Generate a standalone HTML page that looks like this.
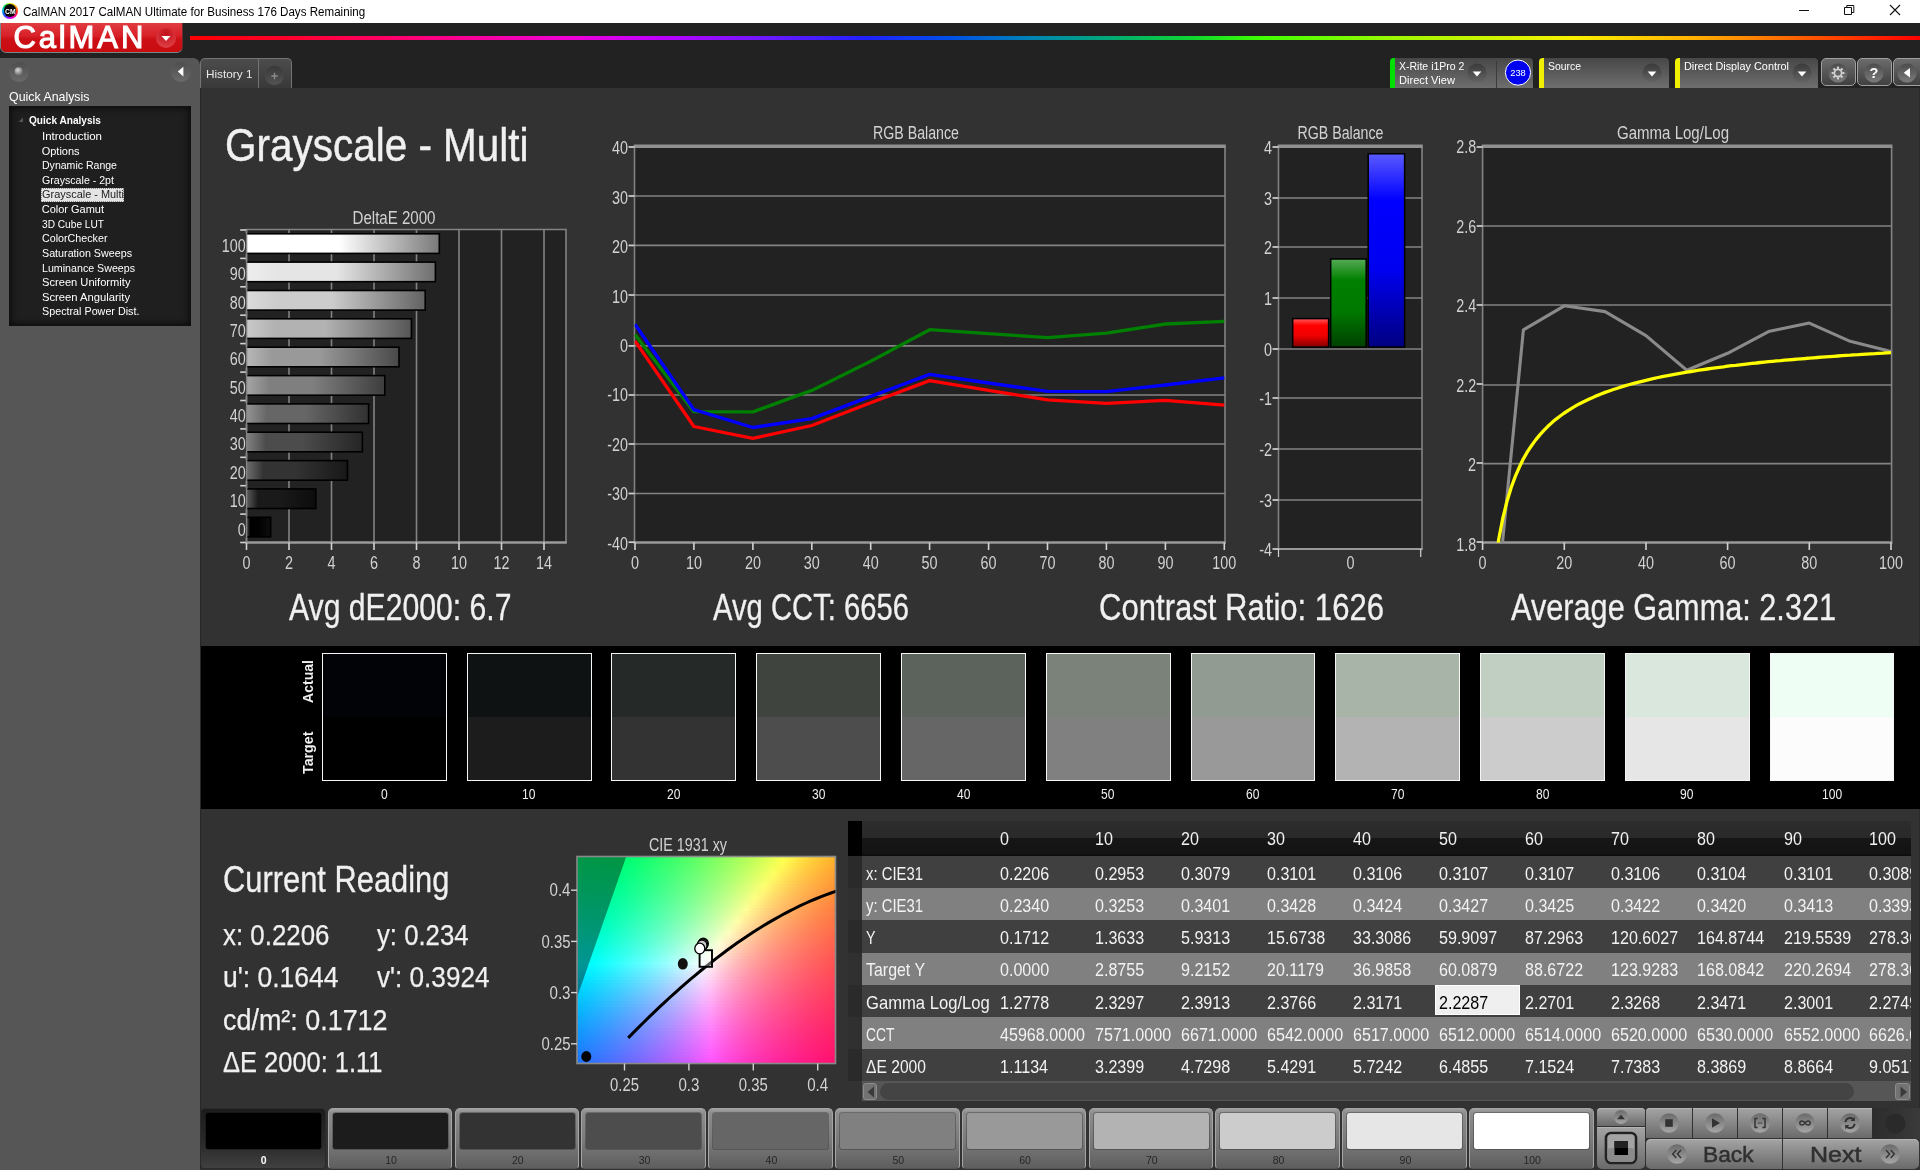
<!DOCTYPE html>
<html><head><meta charset="utf-8"><title>CalMAN</title><style>
html,body{margin:0;padding:0;background:#323232;}
#app{position:relative;width:1920px;height:1170px;overflow:hidden;font-family:"Liberation Sans",sans-serif;will-change:transform;}
.t{position:absolute;white-space:pre;line-height:1;transform-origin:0 0;}
svg{overflow:visible;}
svg text{font-family:"Liberation Sans",sans-serif;}
</style></head><body><div id="app">
<div class="titlebar" style="position:absolute;left:0px;top:0px;width:1920px;height:23px;background:#fff;"><div class="appicon" style="position:absolute;left:2px;top:2.9px;width:16px;height:16px;border-radius:50%;background:conic-gradient(from 0deg,#d8e800,#ffc000 40deg,#ff5000 80deg,#ff1030 110deg,#ff00a0 140deg,#c800ff 180deg,#5030ff 215deg,#0070ff 250deg,#00c8c0 285deg,#00d840 320deg,#80e800 345deg,#d8e800);"><div style="position:absolute;left:1.6px;top:1.6px;width:12.8px;height:12.8px;border-radius:50%;background:#050505;"></div><span class="t" style="left:2.7px;top:4.8px;font-size:7px;color:#fff;transform:scaleX(0.973);font-weight:bold;">CM</span></div><span class="t" style="left:23.2px;top:5.6px;font-size:12px;color:#000;transform:scaleX(0.966);">CalMAN 2017 CalMAN Ultimate for Business 176 Days Remaining</span><svg style="position:absolute;left:1780px;top:0" width="140" height="23" viewBox="1780 0 140 23"><path d="M1799 10.5h10" stroke="#111" stroke-width="1"/><path d="M1844.5 7.5h7v7h-7z M1846.8 7.5v-2h7v7h-2.3" stroke="#111" stroke-width="1" fill="none"/><path d="M1890 5l10 10M1900 5l-10 10" stroke="#111" stroke-width="1.1"/></svg></div>
<div class="header" style="position:absolute;left:0px;top:23px;width:1920px;height:65px;background:#222;"><div style="position:absolute;left:190px;top:12.6px;width:1730px;height:4.9px;background:linear-gradient(90deg,#ff0000 0%,#ff0030 6%,#ff0078 13%,#f000d8 22%,#c000ff 27%,#7018ff 33%,#2020ff 39%,#0050e8 44%,#0088b0 49%,#00a878 53%,#10d830 58%,#40ff00 62%,#a0f800 70%,#f8f000 80%,#ffb000 87%,#ff6000 93%,#ff0000 100%);"></div><div class="logo" style="position:absolute;left:1px;top:0px;width:180.8px;height:29.2px;background:linear-gradient(#e03c40 0%,#d82028 45%,#cc1016 55%,#c80c10 100%);border-radius:0 0 5px 5px;box-shadow:0 1px 0 #7a8686, -1px 0 0 #7a8686, 1px 0 0 #6a2a2e;"><span class="t" style="left:12.4px;top:-1.1px;font-size:31px;color:#fff;-webkit-text-stroke:1.1px #fff;letter-spacing:2.9px;">CalMAN</span><svg style="position:absolute;left:153.8px;top:4px" width="22" height="22" viewBox="0 0 22 22"><defs><radialGradient id="lg1" cx=".5" cy=".3" r=".7"><stop offset="0" stop-color="#c01018"/><stop offset="1" stop-color="#e04048"/></radialGradient></defs><circle cx="11" cy="11" r="10" fill="url(#lg1)"/><path d="M6.5 9h9l-4.5 5z" fill="#fff"/></svg></div></div>
<div class="sidebar" style="position:absolute;left:0px;top:58px;width:200px;height:1112px;background:#565656;border-radius:0 7px 0 0;"><svg style="position:absolute;left:8px;top:3px" width="22" height="22" viewBox="0 0 22 22"><defs><radialGradient id="kb" cx=".4" cy=".35" r=".6"><stop offset="0" stop-color="#d8d8d8"/><stop offset="1" stop-color="#777"/></radialGradient><linearGradient id="kr" x1="0" y1="0" x2="0" y2="1"><stop offset="0" stop-color="#4e4e4e"/><stop offset="1" stop-color="#6a6a6a"/></linearGradient></defs><circle cx="11" cy="11" r="10" fill="url(#kr)"/><circle cx="10.6" cy="10.3" r="4" fill="url(#kb)"/></svg><svg style="position:absolute;left:170px;top:3px" width="22" height="22" viewBox="0 0 22 22"><circle cx="11" cy="11" r="10" fill="url(#kr)"/><path d="M13.4 5.8v9.6l-5.6-4.800z" fill="#fff"/></svg><span class="t" style="left:9.3px;top:32.8px;font-size:12.6px;color:#fff;transform:scaleX(0.983);">Quick Analysis</span><div class="tree" style="position:absolute;left:9px;top:47.5px;width:181.5px;height:220px;background:#1f1f1f;box-shadow:inset 0 0 7px 2px #0c0c0c;"><svg style="position:absolute;left:9px;top:11px" width="6" height="6"><path d="M5 0.5v4.5h-4.5z" fill="#555"/></svg><span class="t" style="left:19.7px;top:9.1px;font-size:11.3px;color:#fff;transform:scaleX(0.893);font-weight:bold;">Quick Analysis</span><span class="t" style="left:32.7px;top:25.4px;font-size:11px;color:#fff;transform:scaleX(1.044);">Introduction</span><span class="t" style="left:32.7px;top:40.0px;font-size:11px;color:#fff;">Options</span><span class="t" style="left:32.7px;top:54.6px;font-size:11px;color:#fff;transform:scaleX(0.958);">Dynamic Range</span><span class="t" style="left:32.7px;top:69.2px;font-size:11px;color:#fff;transform:scaleX(0.965);">Grayscale - 2pt</span><div style="position:absolute;left:31.5px;top:82.38000000000001px;width:83px;height:14px;background:#e4e4e4;outline:1px dotted #888;outline-offset:-1px;"></div><span class="t" style="left:32.7px;top:83.9px;font-size:11px;color:#222;transform:scaleX(0.994);">Grayscale - Multi</span><span class="t" style="left:32.7px;top:98.5px;font-size:11px;color:#fff;">Color Gamut</span><span class="t" style="left:32.7px;top:113.1px;font-size:11px;color:#fff;transform:scaleX(0.922);">3D Cube LUT</span><span class="t" style="left:32.7px;top:127.7px;font-size:11px;color:#fff;transform:scaleX(0.974);">ColorChecker</span><span class="t" style="left:32.7px;top:142.3px;font-size:11px;color:#fff;transform:scaleX(0.975);">Saturation Sweeps</span><span class="t" style="left:32.7px;top:157.0px;font-size:11px;color:#fff;transform:scaleX(0.969);">Luminance Sweeps</span><span class="t" style="left:32.7px;top:171.6px;font-size:11px;color:#fff;transform:scaleX(1.012);">Screen Uniformity</span><span class="t" style="left:32.7px;top:186.2px;font-size:11px;color:#fff;transform:scaleX(1.021);">Screen Angularity</span><span class="t" style="left:32.7px;top:200.8px;font-size:11px;color:#fff;transform:scaleX(0.978);">Spectral Power Dist.</span></div></div>
<div style="position:absolute;left:200px;top:88px;width:1px;height:1082px;background:#272727;"></div>
<div style="position:absolute;left:1919px;top:88px;width:1px;height:1020px;background:#2a2a2a;"></div>
<div class="tab" style="position:absolute;left:200px;top:58px;width:91.5px;height:30px;background:linear-gradient(#4c4c4c,#393939);border:1px solid #747474;border-bottom:none;border-radius:5px 5px 0 0;box-sizing:border-box;"><span class="t" style="left:5.4px;top:10.3px;font-size:11.4px;color:#e8e8e8;transform:scaleX(1.034);">History 1</span><div style="position:absolute;left:56.6px;top:0px;width:1px;height:29px;background:#747474;"></div><svg style="position:absolute;left:62.6px;top:5.6px" width="21" height="21" viewBox="0 0 21 21"><defs><linearGradient id="pl" x1="0" y1="0" x2="0" y2="1"><stop offset="0" stop-color="#383838"/><stop offset="1" stop-color="#545454"/></linearGradient></defs><circle cx="10.5" cy="10.5" r="9.7" fill="url(#pl)"/><path d="M7.300 11h6.400M10.500 7.800v6.400" stroke="#8c8c8c" stroke-width="1.3"/></svg></div>
<div class="panel" style="position:absolute;left:1390px;top:58px;width:142.5px;height:30px;background:linear-gradient(#474747,#6e6e6e);border-radius:4px 4px 0 0;"><div style="position:absolute;left:0px;top:0px;width:5px;height:30px;background:#00e000;border-radius:4px 0 0 0;"></div><span class="t" style="left:8.5px;top:2.5px;font-size:10.8px;color:#fff;transform:scaleX(0.974);">X-Rite i1Pro 2</span><span class="t" style="left:8.5px;top:16.6px;font-size:10.8px;color:#fff;transform:scaleX(1.029);">Direct View</span><svg style="position:absolute;left:77px;top:5px" width="20" height="20" viewBox="0 0 20 20"><defs><linearGradient id="dd1390" x1="0" y1="0" x2="0" y2="1"><stop offset="0" stop-color="#3a3a3a"/><stop offset="1" stop-color="#636363"/></linearGradient></defs><circle cx="10" cy="10" r="9.5" fill="url(#dd1390)"/><path d="M5.7 8.6h8.6l-4.3 4.8z" fill="#fff"/></svg><div style="position:absolute;left:106px;top:3px;width:1px;height:27px;background:#3c3c3c;"></div><svg style="position:absolute;left:113.6px;top:0.7px" width="28" height="28" viewBox="0 0 28 28"><circle cx="14" cy="13.6" r="12.6" fill="#0000f0" stroke="#fff" stroke-width="1"/><text x="14" y="17" font-family="Liberation Sans,sans-serif" font-size="9.5" fill="#fff" text-anchor="middle" textLength="15.5" lengthAdjust="spacingAndGlyphs">238</text></svg></div>
<div class="panel" style="position:absolute;left:1539px;top:58px;width:129.5px;height:30px;background:linear-gradient(#474747,#6e6e6e);border-radius:4px 4px 0 0;"><div style="position:absolute;left:0px;top:0px;width:5px;height:30px;background:#f0f000;border-radius:4px 0 0 0;"></div><span class="t" style="left:8.5px;top:2.5px;font-size:10.8px;color:#fff;transform:scaleX(0.964);">Source</span><svg style="position:absolute;left:103px;top:5px" width="20" height="20" viewBox="0 0 20 20"><defs><linearGradient id="dd1539" x1="0" y1="0" x2="0" y2="1"><stop offset="0" stop-color="#3a3a3a"/><stop offset="1" stop-color="#636363"/></linearGradient></defs><circle cx="10" cy="10" r="9.5" fill="url(#dd1539)"/><path d="M5.7 8.6h8.6l-4.3 4.8z" fill="#fff"/></svg></div>
<div class="panel" style="position:absolute;left:1675px;top:58px;width:143px;height:30px;background:linear-gradient(#474747,#6e6e6e);border-radius:4px 4px 0 0;"><div style="position:absolute;left:0px;top:0px;width:5px;height:30px;background:#f0f000;border-radius:4px 0 0 0;"></div><span class="t" style="left:8.5px;top:2.5px;font-size:10.8px;color:#fff;transform:scaleX(1.006);">Direct Display Control</span><svg style="position:absolute;left:117px;top:5px" width="20" height="20" viewBox="0 0 20 20"><defs><linearGradient id="dd1675" x1="0" y1="0" x2="0" y2="1"><stop offset="0" stop-color="#3a3a3a"/><stop offset="1" stop-color="#636363"/></linearGradient></defs><circle cx="10" cy="10" r="9.5" fill="url(#dd1675)"/><path d="M5.7 8.6h8.6l-4.3 4.8z" fill="#fff"/></svg></div>
<div class="tbtn" style="position:absolute;left:1821px;top:58px;width:34.5px;height:28px;background:linear-gradient(#6c6c6c,#404040);border:1px solid #a0a0a0;border-radius:5px;box-sizing:border-box;"><svg style="position:absolute;left:5px;top:2.5px" width="22" height="22" viewBox="0 0 22 22"><defs><linearGradient id="bc" x1="0" y1="0" x2="0" y2="1"><stop offset="0" stop-color="#4c4c4c"/><stop offset="1" stop-color="#7c7c7c"/></linearGradient></defs><circle cx="11" cy="11" r="9.6" fill="url(#bc)"/><g transform="translate(11 11)" fill="none" stroke="#d4d4d4"><circle r="3.6" stroke-width="1.7"/><g stroke-width="2.1"><path d="M0 -4.3V-6.4" transform="rotate(0)"/><path d="M0 -4.3V-6.4" transform="rotate(45)"/><path d="M0 -4.3V-6.4" transform="rotate(90)"/><path d="M0 -4.3V-6.4" transform="rotate(135)"/><path d="M0 -4.3V-6.4" transform="rotate(180)"/><path d="M0 -4.3V-6.4" transform="rotate(225)"/><path d="M0 -4.3V-6.4" transform="rotate(270)"/><path d="M0 -4.3V-6.4" transform="rotate(315)"/></g></g></svg></div>
<div class="tbtn" style="position:absolute;left:1857px;top:58px;width:34.5px;height:28px;background:linear-gradient(#6c6c6c,#404040);border:1px solid #a0a0a0;border-radius:5px;box-sizing:border-box;"><svg style="position:absolute;left:5px;top:2.5px" width="22" height="22" viewBox="0 0 22 22"><circle cx="11" cy="11" r="9.6" fill="url(#bc)"/><text x="11" y="16.3" font-family="Liberation Sans,sans-serif" font-weight="bold" font-size="14.5" fill="#fff" text-anchor="middle">?</text></svg></div>
<div class="tbtn" style="position:absolute;left:1893px;top:58px;width:32px;height:28px;background:linear-gradient(#6c6c6c,#404040);border:1px solid #a0a0a0;border-radius:5px 0 0 5px;box-sizing:border-box;"><svg style="position:absolute;left:1.5px;top:2.5px" width="22" height="22" viewBox="0 0 22 22"><circle cx="11" cy="11" r="9.6" fill="url(#bc)"/><path d="M14 6v9.6l-6.3-4.8z" fill="#fff"/></svg></div>
<span class="t" style="left:224.8px;top:121.6px;font-size:46.3px;color:#f0f0f0;transform:scaleX(0.874);-webkit-text-stroke:0.45px #f0f0f0;">Grayscale - Multi</span>
<svg style="position:absolute;left:0;top:0" width="1920" height="640" viewBox="0 0 1920 640"><defs><linearGradient id="b100" x1="0" y1="0" x2="1" y2="0"><stop offset="0" stop-color="#ffffff"/><stop offset=".17" stop-color="#ffffff"/><stop offset=".48" stop-color="#ffffff"/><stop offset="1" stop-color="#7a7a7a"/></linearGradient><linearGradient id="b90" x1="0" y1="0" x2="1" y2="0"><stop offset="0" stop-color="#ededed"/><stop offset=".17" stop-color="#e5e5e5"/><stop offset=".48" stop-color="#e5e5e5"/><stop offset="1" stop-color="#6e6e6e"/></linearGradient><linearGradient id="b80" x1="0" y1="0" x2="1" y2="0"><stop offset="0" stop-color="#dbdbdb"/><stop offset=".17" stop-color="#cccccc"/><stop offset=".48" stop-color="#cccccc"/><stop offset="1" stop-color="#626262"/></linearGradient><linearGradient id="b70" x1="0" y1="0" x2="1" y2="0"><stop offset="0" stop-color="#c9c9c9"/><stop offset=".17" stop-color="#b2b2b2"/><stop offset=".48" stop-color="#b2b2b2"/><stop offset="1" stop-color="#565656"/></linearGradient><linearGradient id="b60" x1="0" y1="0" x2="1" y2="0"><stop offset="0" stop-color="#b8b8b8"/><stop offset=".17" stop-color="#999999"/><stop offset=".48" stop-color="#999999"/><stop offset="1" stop-color="#494949"/></linearGradient><linearGradient id="b50" x1="0" y1="0" x2="1" y2="0"><stop offset="0" stop-color="#a6a6a6"/><stop offset=".17" stop-color="#7f7f7f"/><stop offset=".48" stop-color="#7f7f7f"/><stop offset="1" stop-color="#3d3d3d"/></linearGradient><linearGradient id="b40" x1="0" y1="0" x2="1" y2="0"><stop offset="0" stop-color="#949494"/><stop offset=".17" stop-color="#666666"/><stop offset=".48" stop-color="#666666"/><stop offset="1" stop-color="#313131"/></linearGradient><linearGradient id="b30" x1="0" y1="0" x2="1" y2="0"><stop offset="0" stop-color="#828282"/><stop offset=".17" stop-color="#4c4c4c"/><stop offset=".48" stop-color="#4c4c4c"/><stop offset="1" stop-color="#252525"/></linearGradient><linearGradient id="b20" x1="0" y1="0" x2="1" y2="0"><stop offset="0" stop-color="#707070"/><stop offset=".17" stop-color="#333333"/><stop offset=".48" stop-color="#333333"/><stop offset="1" stop-color="#181818"/></linearGradient><linearGradient id="b10" x1="0" y1="0" x2="1" y2="0"><stop offset="0" stop-color="#5e5e5e"/><stop offset=".17" stop-color="#1a1a1a"/><stop offset=".48" stop-color="#1a1a1a"/><stop offset="1" stop-color="#0c0c0c"/></linearGradient><linearGradient id="b0" x1="0" y1="0" x2="1" y2="0"><stop offset="0" stop-color="#4c4c4c"/><stop offset=".17" stop-color="#000000"/><stop offset=".48" stop-color="#000000"/><stop offset="1" stop-color="#0e0e0e"/></linearGradient><linearGradient id="gR" x1="0" y1="0" x2="0" y2="1"><stop offset="0" stop-color="#ff5a5a"/><stop offset=".24" stop-color="#ff0000"/><stop offset=".6" stop-color="#f00000"/><stop offset="1" stop-color="#800000"/></linearGradient><linearGradient id="gG" x1="0" y1="0" x2="0" y2="1"><stop offset="0" stop-color="#55aa55"/><stop offset=".24" stop-color="#008000"/><stop offset=".6" stop-color="#007800"/><stop offset="1" stop-color="#004000"/></linearGradient><linearGradient id="gB" x1="0" y1="0" x2="0" y2="1"><stop offset="0" stop-color="#5a5aff"/><stop offset=".24" stop-color="#0000ff"/><stop offset=".6" stop-color="#0000f0"/><stop offset="1" stop-color="#000080"/></linearGradient></defs><g id="deltaE"><rect x="246.5" y="230" width="319.5" height="312.5" fill="#222"/><path d="M289.0 230V542.5" stroke="#838383" stroke-width="1.6"/><path d="M331.5 230V542.5" stroke="#838383" stroke-width="1.6"/><path d="M374.0 230V542.5" stroke="#838383" stroke-width="1.6"/><path d="M416.5 230V542.5" stroke="#838383" stroke-width="1.6"/><path d="M459.0 230V542.5" stroke="#838383" stroke-width="1.6"/><path d="M501.5 230V542.5" stroke="#838383" stroke-width="1.6"/><path d="M544.0 230V542.5" stroke="#838383" stroke-width="1.6"/><path d="M246.5 542.5V229.5H566V542.5" stroke="#838383" stroke-width="1.6" fill="none"/><path d="M245.7 542.5H566.8" stroke="#9a9a9a" stroke-width="2.4"/><path d="M240.2 230.0H246.5" stroke="#d2d2d2" stroke-width="1.6"/><path d="M240.2 258.4H246.5" stroke="#d2d2d2" stroke-width="1.6"/><path d="M240.2 286.8H246.5" stroke="#d2d2d2" stroke-width="1.6"/><path d="M240.2 315.2H246.5" stroke="#d2d2d2" stroke-width="1.6"/><path d="M240.2 343.6H246.5" stroke="#d2d2d2" stroke-width="1.6"/><path d="M240.2 372.1H246.5" stroke="#d2d2d2" stroke-width="1.6"/><path d="M240.2 400.5H246.5" stroke="#d2d2d2" stroke-width="1.6"/><path d="M240.2 428.9H246.5" stroke="#d2d2d2" stroke-width="1.6"/><path d="M240.2 457.3H246.5" stroke="#d2d2d2" stroke-width="1.6"/><path d="M240.2 485.7H246.5" stroke="#d2d2d2" stroke-width="1.6"/><path d="M240.2 514.1H246.5" stroke="#d2d2d2" stroke-width="1.6"/><path d="M240.2 542.5H246.5" stroke="#d2d2d2" stroke-width="1.6"/><path d="M246.5 542.5V550.0" stroke="#d2d2d2" stroke-width="1.6"/><text x="246.5" y="569.0" font-size="17.5" fill="#d2d2d2" text-anchor="middle" textLength="8.0" lengthAdjust="spacingAndGlyphs">0</text><path d="M289.0 542.5V550.0" stroke="#d2d2d2" stroke-width="1.6"/><text x="289.0" y="569.0" font-size="17.5" fill="#d2d2d2" text-anchor="middle" textLength="8.0" lengthAdjust="spacingAndGlyphs">2</text><path d="M331.5 542.5V550.0" stroke="#d2d2d2" stroke-width="1.6"/><text x="331.5" y="569.0" font-size="17.5" fill="#d2d2d2" text-anchor="middle" textLength="8.0" lengthAdjust="spacingAndGlyphs">4</text><path d="M374.0 542.5V550.0" stroke="#d2d2d2" stroke-width="1.6"/><text x="374.0" y="569.0" font-size="17.5" fill="#d2d2d2" text-anchor="middle" textLength="8.0" lengthAdjust="spacingAndGlyphs">6</text><path d="M416.5 542.5V550.0" stroke="#d2d2d2" stroke-width="1.6"/><text x="416.5" y="569.0" font-size="17.5" fill="#d2d2d2" text-anchor="middle" textLength="8.0" lengthAdjust="spacingAndGlyphs">8</text><path d="M459.0 542.5V550.0" stroke="#d2d2d2" stroke-width="1.6"/><text x="459.0" y="569.0" font-size="17.5" fill="#d2d2d2" text-anchor="middle" textLength="16.0" lengthAdjust="spacingAndGlyphs">10</text><path d="M501.5 542.5V550.0" stroke="#d2d2d2" stroke-width="1.6"/><text x="501.5" y="569.0" font-size="17.5" fill="#d2d2d2" text-anchor="middle" textLength="16.0" lengthAdjust="spacingAndGlyphs">12</text><path d="M544.0 542.5V550.0" stroke="#d2d2d2" stroke-width="1.6"/><text x="544.0" y="569.0" font-size="17.5" fill="#d2d2d2" text-anchor="middle" textLength="16.0" lengthAdjust="spacingAndGlyphs">14</text><rect x="246.2" y="233.8" width="193.1" height="19.6" fill="url(#b100)" stroke="#000" stroke-width="1.6"/><text x="245.7" y="252.0" font-size="17.5" fill="#d2d2d2" text-anchor="end" textLength="23.9" lengthAdjust="spacingAndGlyphs">100</text><rect x="246.2" y="262.1" width="189.2" height="19.6" fill="url(#b90)" stroke="#000" stroke-width="1.6"/><text x="245.7" y="280.3" font-size="17.5" fill="#d2d2d2" text-anchor="end" textLength="16.0" lengthAdjust="spacingAndGlyphs">90</text><rect x="246.2" y="290.5" width="179.0" height="19.6" fill="url(#b80)" stroke="#000" stroke-width="1.6"/><text x="245.7" y="308.7" font-size="17.5" fill="#d2d2d2" text-anchor="end" textLength="16.0" lengthAdjust="spacingAndGlyphs">80</text><rect x="246.2" y="318.8" width="165.2" height="19.6" fill="url(#b70)" stroke="#000" stroke-width="1.6"/><text x="245.7" y="337.0" font-size="17.5" fill="#d2d2d2" text-anchor="end" textLength="16.0" lengthAdjust="spacingAndGlyphs">70</text><rect x="246.2" y="347.2" width="152.8" height="19.6" fill="url(#b60)" stroke="#000" stroke-width="1.6"/><text x="245.7" y="365.4" font-size="17.5" fill="#d2d2d2" text-anchor="end" textLength="16.0" lengthAdjust="spacingAndGlyphs">60</text><rect x="246.2" y="375.6" width="138.6" height="19.6" fill="url(#b50)" stroke="#000" stroke-width="1.6"/><text x="245.7" y="393.8" font-size="17.5" fill="#d2d2d2" text-anchor="end" textLength="16.0" lengthAdjust="spacingAndGlyphs">50</text><rect x="246.2" y="403.9" width="122.4" height="19.6" fill="url(#b40)" stroke="#000" stroke-width="1.6"/><text x="245.7" y="422.1" font-size="17.5" fill="#d2d2d2" text-anchor="end" textLength="16.0" lengthAdjust="spacingAndGlyphs">40</text><rect x="246.2" y="432.2" width="116.2" height="19.6" fill="url(#b30)" stroke="#000" stroke-width="1.6"/><text x="245.7" y="450.4" font-size="17.5" fill="#d2d2d2" text-anchor="end" textLength="16.0" lengthAdjust="spacingAndGlyphs">30</text><rect x="246.2" y="460.6" width="101.3" height="19.6" fill="url(#b20)" stroke="#000" stroke-width="1.6"/><text x="245.7" y="478.8" font-size="17.5" fill="#d2d2d2" text-anchor="end" textLength="16.0" lengthAdjust="spacingAndGlyphs">20</text><rect x="246.2" y="488.9" width="69.6" height="19.6" fill="url(#b10)" stroke="#000" stroke-width="1.6"/><text x="245.7" y="507.1" font-size="17.5" fill="#d2d2d2" text-anchor="end" textLength="16.0" lengthAdjust="spacingAndGlyphs">10</text><rect x="246.2" y="517.3" width="24.5" height="19.6" fill="url(#b0)" stroke="#000" stroke-width="1.6"/><text x="245.7" y="535.5" font-size="17.5" fill="#d2d2d2" text-anchor="end" textLength="8.0" lengthAdjust="spacingAndGlyphs">0</text><path d="M246.5 542.5V230" stroke="#838383" stroke-width="1.6"/><text x="394.0" y="224.0" font-size="17.5" fill="#d2d2d2" text-anchor="middle" textLength="83.0" lengthAdjust="spacingAndGlyphs">DeltaE 2000</text></g><g id="rgbline"><rect x="634.5" y="146.5" width="590.5" height="396.0" fill="#222"/><path d="M634.5 493.5H1225" stroke="#838383" stroke-width="1.7"/><path d="M634.5 444.0H1225" stroke="#838383" stroke-width="1.7"/><path d="M634.5 395.0H1225" stroke="#838383" stroke-width="1.7"/><path d="M634.5 345.9H1225" stroke="#838383" stroke-width="1.7"/><path d="M634.5 295.0H1225" stroke="#838383" stroke-width="1.7"/><path d="M634.5 245.4H1225" stroke="#838383" stroke-width="1.7"/><path d="M634.5 196.0H1225" stroke="#838383" stroke-width="1.7"/><path d="M634.5 542.5V146.5M1225 146.5V542.5" stroke="#838383" stroke-width="1.6" fill="none"/><path d="M633.7 146.2H1225.8" stroke="#909090" stroke-width="3.6"/><path d="M633.7 542.5H1225.8" stroke="#9a9a9a" stroke-width="2.6"/><path d="M628.5 542.2H634.5" stroke="#d2d2d2" stroke-width="1.7"/><text x="628.0" y="549.5" font-size="17.5" fill="#d2d2d2" text-anchor="end" textLength="20.7" lengthAdjust="spacingAndGlyphs">-40</text><path d="M628.5 493.5H634.5" stroke="#d2d2d2" stroke-width="1.7"/><text x="628.0" y="500.1" font-size="17.5" fill="#d2d2d2" text-anchor="end" textLength="20.7" lengthAdjust="spacingAndGlyphs">-30</text><path d="M628.5 444.0H634.5" stroke="#d2d2d2" stroke-width="1.7"/><text x="628.0" y="450.7" font-size="17.5" fill="#d2d2d2" text-anchor="end" textLength="20.7" lengthAdjust="spacingAndGlyphs">-20</text><path d="M628.5 395.0H634.5" stroke="#d2d2d2" stroke-width="1.7"/><text x="628.0" y="401.3" font-size="17.5" fill="#d2d2d2" text-anchor="end" textLength="20.7" lengthAdjust="spacingAndGlyphs">-10</text><path d="M628.5 345.9H634.5" stroke="#d2d2d2" stroke-width="1.7"/><text x="628.0" y="351.9" font-size="17.5" fill="#d2d2d2" text-anchor="end" textLength="8.0" lengthAdjust="spacingAndGlyphs">0</text><path d="M628.5 295.0H634.5" stroke="#d2d2d2" stroke-width="1.7"/><text x="628.0" y="302.5" font-size="17.5" fill="#d2d2d2" text-anchor="end" textLength="16.0" lengthAdjust="spacingAndGlyphs">10</text><path d="M628.5 245.4H634.5" stroke="#d2d2d2" stroke-width="1.7"/><text x="628.0" y="253.1" font-size="17.5" fill="#d2d2d2" text-anchor="end" textLength="16.0" lengthAdjust="spacingAndGlyphs">20</text><path d="M628.5 196.0H634.5" stroke="#d2d2d2" stroke-width="1.7"/><text x="628.0" y="203.7" font-size="17.5" fill="#d2d2d2" text-anchor="end" textLength="16.0" lengthAdjust="spacingAndGlyphs">30</text><path d="M628.5 147.0H634.5" stroke="#d2d2d2" stroke-width="1.7"/><text x="628.0" y="154.3" font-size="17.5" fill="#d2d2d2" text-anchor="end" textLength="16.0" lengthAdjust="spacingAndGlyphs">40</text><path d="M635.0 542.5V550.0" stroke="#d2d2d2" stroke-width="1.6"/><text x="635.0" y="569.0" font-size="17.5" fill="#d2d2d2" text-anchor="middle" textLength="8.0" lengthAdjust="spacingAndGlyphs">0</text><path d="M693.9 542.5V550.0" stroke="#d2d2d2" stroke-width="1.6"/><text x="693.9" y="569.0" font-size="17.5" fill="#d2d2d2" text-anchor="middle" textLength="16.0" lengthAdjust="spacingAndGlyphs">10</text><path d="M752.9 542.5V550.0" stroke="#d2d2d2" stroke-width="1.6"/><text x="752.9" y="569.0" font-size="17.5" fill="#d2d2d2" text-anchor="middle" textLength="16.0" lengthAdjust="spacingAndGlyphs">20</text><path d="M811.8 542.5V550.0" stroke="#d2d2d2" stroke-width="1.6"/><text x="811.8" y="569.0" font-size="17.5" fill="#d2d2d2" text-anchor="middle" textLength="16.0" lengthAdjust="spacingAndGlyphs">30</text><path d="M870.7 542.5V550.0" stroke="#d2d2d2" stroke-width="1.6"/><text x="870.7" y="569.0" font-size="17.5" fill="#d2d2d2" text-anchor="middle" textLength="16.0" lengthAdjust="spacingAndGlyphs">40</text><path d="M929.6 542.5V550.0" stroke="#d2d2d2" stroke-width="1.6"/><text x="929.6" y="569.0" font-size="17.5" fill="#d2d2d2" text-anchor="middle" textLength="16.0" lengthAdjust="spacingAndGlyphs">50</text><path d="M988.6 542.5V550.0" stroke="#d2d2d2" stroke-width="1.6"/><text x="988.6" y="569.0" font-size="17.5" fill="#d2d2d2" text-anchor="middle" textLength="16.0" lengthAdjust="spacingAndGlyphs">60</text><path d="M1047.5 542.5V550.0" stroke="#d2d2d2" stroke-width="1.6"/><text x="1047.5" y="569.0" font-size="17.5" fill="#d2d2d2" text-anchor="middle" textLength="16.0" lengthAdjust="spacingAndGlyphs">70</text><path d="M1106.4 542.5V550.0" stroke="#d2d2d2" stroke-width="1.6"/><text x="1106.4" y="569.0" font-size="17.5" fill="#d2d2d2" text-anchor="middle" textLength="16.0" lengthAdjust="spacingAndGlyphs">80</text><path d="M1165.4 542.5V550.0" stroke="#d2d2d2" stroke-width="1.6"/><text x="1165.4" y="569.0" font-size="17.5" fill="#d2d2d2" text-anchor="middle" textLength="16.0" lengthAdjust="spacingAndGlyphs">90</text><path d="M1224.3 542.5V550.0" stroke="#d2d2d2" stroke-width="1.6"/><text x="1224.3" y="569.0" font-size="17.5" fill="#d2d2d2" text-anchor="middle" textLength="23.9" lengthAdjust="spacingAndGlyphs">100</text><clipPath id="cl1"><rect x="634.5" y="146.5" width="590.5" height="396.0"/></clipPath><g clip-path="url(#cl1)" fill="none" stroke-width="3.3" stroke-linejoin="round"><polyline points="635.0,341.0 693.9,426.5 752.9,438.3 811.8,425.5 870.7,402.8 929.6,380.6 988.6,390.4 1047.5,399.8 1106.4,403.3 1165.4,400.3 1224.3,405.2" stroke="#ff0000"/><polyline points="635.0,334.6 693.9,411.7 752.9,411.9 811.8,390.4 870.7,361.3 929.6,329.7 988.6,333.6 1047.5,337.6 1106.4,333.1 1165.4,324.0 1224.3,321.3" stroke="#008000"/><polyline points="635.0,324.3 693.9,409.7 752.9,427.5 811.8,418.6 870.7,396.4 929.6,374.4 988.6,383.0 1047.5,391.4 1106.4,391.7 1165.4,385.0 1224.3,377.8" stroke="#0000ff"/></g><text x="916.0" y="138.5" font-size="17.5" fill="#d2d2d2" text-anchor="middle" textLength="86.0" lengthAdjust="spacingAndGlyphs">RGB Balance</text></g><g id="rgbbar"><rect x="1278.5" y="146.5" width="143.5" height="402.5" fill="#222"/><path d="M1278.5 500.0H1422" stroke="#838383" stroke-width="1.7"/><path d="M1278.5 449.0H1422" stroke="#838383" stroke-width="1.7"/><path d="M1278.5 398.0H1422" stroke="#838383" stroke-width="1.7"/><path d="M1278.5 349.0H1422" stroke="#838383" stroke-width="1.7"/><path d="M1278.5 298.0H1422" stroke="#838383" stroke-width="1.7"/><path d="M1278.5 247.0H1422" stroke="#838383" stroke-width="1.7"/><path d="M1278.5 198.0H1422" stroke="#838383" stroke-width="1.7"/><path d="M1278.5 549V146.5M1422 146.5V549" stroke="#838383" stroke-width="1.6" fill="none"/><path d="M1277.7 146.2H1422.8" stroke="#909090" stroke-width="3.6"/><path d="M1277.7 549H1422.8" stroke="#9a9a9a" stroke-width="2"/><path d="M1272.5 549.0H1278.5" stroke="#d2d2d2" stroke-width="1.7"/><text x="1272.0" y="555.9" font-size="17.5" fill="#d2d2d2" text-anchor="end" textLength="12.8" lengthAdjust="spacingAndGlyphs">-4</text><path d="M1272.5 500.0H1278.5" stroke="#d2d2d2" stroke-width="1.7"/><text x="1272.0" y="506.9" font-size="17.5" fill="#d2d2d2" text-anchor="end" textLength="12.8" lengthAdjust="spacingAndGlyphs">-3</text><path d="M1272.5 449.0H1278.5" stroke="#d2d2d2" stroke-width="1.7"/><text x="1272.0" y="455.9" font-size="17.5" fill="#d2d2d2" text-anchor="end" textLength="12.8" lengthAdjust="spacingAndGlyphs">-2</text><path d="M1272.5 398.0H1278.5" stroke="#d2d2d2" stroke-width="1.7"/><text x="1272.0" y="404.9" font-size="17.5" fill="#d2d2d2" text-anchor="end" textLength="12.8" lengthAdjust="spacingAndGlyphs">-1</text><path d="M1272.5 349.0H1278.5" stroke="#d2d2d2" stroke-width="1.7"/><text x="1272.0" y="355.9" font-size="17.5" fill="#d2d2d2" text-anchor="end" textLength="8.0" lengthAdjust="spacingAndGlyphs">0</text><path d="M1272.5 298.0H1278.5" stroke="#d2d2d2" stroke-width="1.7"/><text x="1272.0" y="304.9" font-size="17.5" fill="#d2d2d2" text-anchor="end" textLength="8.0" lengthAdjust="spacingAndGlyphs">1</text><path d="M1272.5 247.0H1278.5" stroke="#d2d2d2" stroke-width="1.7"/><text x="1272.0" y="253.9" font-size="17.5" fill="#d2d2d2" text-anchor="end" textLength="8.0" lengthAdjust="spacingAndGlyphs">2</text><path d="M1272.5 198.0H1278.5" stroke="#d2d2d2" stroke-width="1.7"/><text x="1272.0" y="204.9" font-size="17.5" fill="#d2d2d2" text-anchor="end" textLength="8.0" lengthAdjust="spacingAndGlyphs">3</text><path d="M1272.5 147.0H1278.5" stroke="#d2d2d2" stroke-width="1.7"/><text x="1272.0" y="153.9" font-size="17.5" fill="#d2d2d2" text-anchor="end" textLength="8.0" lengthAdjust="spacingAndGlyphs">4</text><path d="M1278.5 549V557M1420.7 549V557" stroke="#d2d2d2" stroke-width="1.2"/><text x="1350.5" y="569.0" font-size="17.5" fill="#d2d2d2" text-anchor="middle" textLength="8.0" lengthAdjust="spacingAndGlyphs">0</text><rect x="1292.7" y="318.6" width="35.9" height="28.5" fill="url(#gR)" stroke="#000" stroke-width="1.5"/><rect x="1330.7" y="259" width="35.5" height="88.1" fill="url(#gG)" stroke="#000" stroke-width="1.5"/><rect x="1368.2" y="153.8" width="36.4" height="193.3" fill="url(#gB)" stroke="#000" stroke-width="1.5"/><text x="1340.5" y="138.5" font-size="17.5" fill="#d2d2d2" text-anchor="middle" textLength="86.0" lengthAdjust="spacingAndGlyphs">RGB Balance</text></g><g id="gamma"><rect x="1482.6" y="146.5" width="409.0" height="396.0" fill="#222"/><path d="M1482.6 463.6H1891.6" stroke="#838383" stroke-width="1.7"/><path d="M1482.6 385.0H1891.6" stroke="#838383" stroke-width="1.7"/><path d="M1482.6 305.0H1891.6" stroke="#838383" stroke-width="1.7"/><path d="M1482.6 226.0H1891.6" stroke="#838383" stroke-width="1.7"/><path d="M1482.6 542.5V146.5M1891.6 146.5V542.5" stroke="#838383" stroke-width="1.6" fill="none"/><path d="M1481.8 146.2H1892.3999999999999" stroke="#909090" stroke-width="3.6"/><path d="M1481.8 542.5H1892.3999999999999" stroke="#9a9a9a" stroke-width="2.6"/><path d="M1476.6 542.0H1482.6" stroke="#d2d2d2" stroke-width="1.7"/><text x="1476.1" y="550.8" font-size="17.5" fill="#d2d2d2" text-anchor="end" textLength="19.9" lengthAdjust="spacingAndGlyphs">1.8</text><path d="M1476.6 463.0H1482.6" stroke="#d2d2d2" stroke-width="1.7"/><text x="1476.1" y="471.3" font-size="17.5" fill="#d2d2d2" text-anchor="end" textLength="8.0" lengthAdjust="spacingAndGlyphs">2</text><path d="M1476.6 384.0H1482.6" stroke="#d2d2d2" stroke-width="1.7"/><text x="1476.1" y="391.8" font-size="17.5" fill="#d2d2d2" text-anchor="end" textLength="19.9" lengthAdjust="spacingAndGlyphs">2.2</text><path d="M1476.6 305.0H1482.6" stroke="#d2d2d2" stroke-width="1.7"/><text x="1476.1" y="312.3" font-size="17.5" fill="#d2d2d2" text-anchor="end" textLength="19.9" lengthAdjust="spacingAndGlyphs">2.4</text><path d="M1476.6 226.0H1482.6" stroke="#d2d2d2" stroke-width="1.7"/><text x="1476.1" y="232.8" font-size="17.5" fill="#d2d2d2" text-anchor="end" textLength="19.9" lengthAdjust="spacingAndGlyphs">2.6</text><path d="M1476.6 147.0H1482.6" stroke="#d2d2d2" stroke-width="1.7"/><text x="1476.1" y="153.3" font-size="17.5" fill="#d2d2d2" text-anchor="end" textLength="19.9" lengthAdjust="spacingAndGlyphs">2.8</text><path d="M1482.6 542.5V550.0" stroke="#d2d2d2" stroke-width="1.6"/><text x="1482.6" y="569.0" font-size="17.5" fill="#d2d2d2" text-anchor="middle" textLength="8.0" lengthAdjust="spacingAndGlyphs">0</text><path d="M1564.3 542.5V550.0" stroke="#d2d2d2" stroke-width="1.6"/><text x="1564.3" y="569.0" font-size="17.5" fill="#d2d2d2" text-anchor="middle" textLength="16.0" lengthAdjust="spacingAndGlyphs">20</text><path d="M1646.0 542.5V550.0" stroke="#d2d2d2" stroke-width="1.6"/><text x="1646.0" y="569.0" font-size="17.5" fill="#d2d2d2" text-anchor="middle" textLength="16.0" lengthAdjust="spacingAndGlyphs">40</text><path d="M1727.6 542.5V550.0" stroke="#d2d2d2" stroke-width="1.6"/><text x="1727.6" y="569.0" font-size="17.5" fill="#d2d2d2" text-anchor="middle" textLength="16.0" lengthAdjust="spacingAndGlyphs">60</text><path d="M1809.3 542.5V550.0" stroke="#d2d2d2" stroke-width="1.6"/><text x="1809.3" y="569.0" font-size="17.5" fill="#d2d2d2" text-anchor="middle" textLength="16.0" lengthAdjust="spacingAndGlyphs">80</text><path d="M1891.0 542.5V550.0" stroke="#d2d2d2" stroke-width="1.6"/><text x="1891.0" y="569.0" font-size="17.5" fill="#d2d2d2" text-anchor="middle" textLength="23.9" lengthAdjust="spacingAndGlyphs">100</text><clipPath id="cl2"><rect x="1482.6" y="146.5" width="410.0" height="396.0"/></clipPath><g clip-path="url(#cl2)" fill="none" stroke-linejoin="round"><polyline points="1482.6,745.0 1523.4,329.8 1564.3,305.8 1605.1,311.6 1646.0,335.6 1686.8,370.2 1727.6,353.3 1768.5,331.6 1809.3,323.1 1850.2,341.3 1891.0,351.6" stroke="#8a8a8a" stroke-width="3.1"/><polyline points="1494.9,566.2 1498.9,538.3 1503.0,517.4 1507.1,500.9 1511.2,487.5 1515.3,476.4 1519.4,467.0 1523.4,458.8 1527.5,451.7 1531.6,445.5 1535.7,439.9 1539.8,434.9 1543.9,430.4 1547.9,426.3 1552.0,422.6 1556.1,419.1 1560.2,416.0 1564.3,413.0 1568.4,410.3 1572.4,407.8 1576.5,405.4 1580.6,403.2 1584.7,401.2 1588.8,399.2 1592.9,397.4 1597.0,395.6 1601.0,394.0 1605.1,392.4 1609.2,391.0 1613.3,389.5 1617.4,388.2 1621.5,386.9 1625.5,385.7 1629.6,384.5 1633.7,383.4 1637.8,382.3 1641.9,381.3 1646.0,380.3 1650.0,379.4 1654.1,378.4 1658.2,377.5 1662.3,376.7 1666.4,375.9 1670.5,375.1 1674.5,374.3 1678.6,373.6 1682.7,372.9 1686.8,372.2 1690.9,371.5 1695.0,370.8 1699.1,370.2 1703.1,369.6 1707.2,369.0 1711.3,368.4 1715.4,367.8 1719.5,367.3 1723.6,366.8 1727.6,366.2 1731.7,365.7 1735.8,365.3 1739.9,364.8 1744.0,364.3 1748.1,363.8 1752.1,363.4 1756.2,363.0 1760.3,362.5 1764.4,362.1 1768.5,361.7 1772.6,361.3 1776.6,360.9 1780.7,360.6 1784.8,360.2 1788.9,359.8 1793.0,359.5 1797.1,359.1 1801.2,358.8 1805.2,358.5 1809.3,358.1 1813.4,357.8 1817.5,357.5 1821.6,357.2 1825.7,356.9 1829.7,356.6 1833.8,356.3 1837.9,356.0 1842.0,355.7 1846.1,355.4 1850.2,355.2 1854.2,354.9 1858.3,354.7 1862.4,354.4 1866.5,354.1 1870.6,353.9 1874.7,353.7 1878.7,353.4 1882.8,353.2 1886.9,352.9 1891.0,352.7" stroke="#ffff00" stroke-width="3.3"/></g><text x="1673.0" y="138.5" font-size="17.5" fill="#d2d2d2" text-anchor="middle" textLength="112.0" lengthAdjust="spacingAndGlyphs">Gamma Log/Log</text></g></svg>
<span class="t" style="left:288.7px;top:589.9px;font-size:36.3px;color:#f0f0f0;transform:scaleX(0.831);-webkit-text-stroke:0.3px #f0f0f0;">Avg dE2000: 6.7</span>
<span class="t" style="left:712.9px;top:589.9px;font-size:36.3px;color:#f0f0f0;transform:scaleX(0.805);-webkit-text-stroke:0.3px #f0f0f0;">Avg CCT: 6656</span>
<span class="t" style="left:1099.0px;top:589.9px;font-size:36.3px;color:#f0f0f0;transform:scaleX(0.856);-webkit-text-stroke:0.3px #f0f0f0;">Contrast Ratio: 1626</span>
<span class="t" style="left:1511.0px;top:589.9px;font-size:36.3px;color:#f0f0f0;transform:scaleX(0.845);-webkit-text-stroke:0.3px #f0f0f0;">Average Gamma: 2.321</span>
<div class="strip" style="position:absolute;left:201px;top:646px;width:1719px;height:163px;background:#000;"><div style="position:absolute;left:120.9px;top:7px;width:124.9px;height:128px;box-sizing:border-box;border:1px solid #f6f6f6;background:linear-gradient(#020307 0,#020307 49.7%,#000000 49.7%,#000000 100%);"></div><span class="t" style="left:179.9px;top:140.7px;font-size:14.5px;color:#f0f0f0;transform:scaleX(0.830);">0</span><div style="position:absolute;left:265.7px;top:7px;width:124.9px;height:128px;box-sizing:border-box;border:1px solid #f6f6f6;background:linear-gradient(#0f1213 0,#0f1213 49.7%,#1c1c1c 49.7%,#1c1c1c 100%);"></div><span class="t" style="left:321.4px;top:140.7px;font-size:14.5px;color:#f0f0f0;transform:scaleX(0.830);">10</span><div style="position:absolute;left:410.4px;top:7px;width:124.9px;height:128px;box-sizing:border-box;border:1px solid #f6f6f6;background:linear-gradient(#252928 0,#252928 49.7%,#333333 49.7%,#333333 100%);"></div><span class="t" style="left:466.1px;top:140.7px;font-size:14.5px;color:#f0f0f0;transform:scaleX(0.830);">20</span><div style="position:absolute;left:555.2px;top:7px;width:124.9px;height:128px;box-sizing:border-box;border:1px solid #f6f6f6;background:linear-gradient(#40443f 0,#40443f 49.7%,#4d4d4d 49.7%,#4d4d4d 100%);"></div><span class="t" style="left:610.9px;top:140.7px;font-size:14.5px;color:#f0f0f0;transform:scaleX(0.830);">30</span><div style="position:absolute;left:699.9px;top:7px;width:124.9px;height:128px;box-sizing:border-box;border:1px solid #f6f6f6;background:linear-gradient(#5c635c 0,#5c635c 49.7%,#666666 49.7%,#666666 100%);"></div><span class="t" style="left:755.6px;top:140.7px;font-size:14.5px;color:#f0f0f0;transform:scaleX(0.830);">40</span><div style="position:absolute;left:844.7px;top:7px;width:124.9px;height:128px;box-sizing:border-box;border:1px solid #f6f6f6;background:linear-gradient(#7a8279 0,#7a8279 49.7%,#808080 49.7%,#808080 100%);"></div><span class="t" style="left:900.4px;top:140.7px;font-size:14.5px;color:#f0f0f0;transform:scaleX(0.830);">50</span><div style="position:absolute;left:989.5px;top:7px;width:124.9px;height:128px;box-sizing:border-box;border:1px solid #f6f6f6;background:linear-gradient(#929b91 0,#929b91 49.7%,#999999 49.7%,#999999 100%);"></div><span class="t" style="left:1045.2px;top:140.7px;font-size:14.5px;color:#f0f0f0;transform:scaleX(0.830);">60</span><div style="position:absolute;left:1134.2px;top:7px;width:124.9px;height:128px;box-sizing:border-box;border:1px solid #f6f6f6;background:linear-gradient(#a9b4a9 0,#a9b4a9 49.7%,#b3b3b3 49.7%,#b3b3b3 100%);"></div><span class="t" style="left:1189.9px;top:140.7px;font-size:14.5px;color:#f0f0f0;transform:scaleX(0.830);">70</span><div style="position:absolute;left:1279.0px;top:7px;width:124.9px;height:128px;box-sizing:border-box;border:1px solid #f6f6f6;background:linear-gradient(#c1cec2 0,#c1cec2 49.7%,#cccccc 49.7%,#cccccc 100%);"></div><span class="t" style="left:1334.7px;top:140.7px;font-size:14.5px;color:#f0f0f0;transform:scaleX(0.830);">80</span><div style="position:absolute;left:1423.7px;top:7px;width:124.9px;height:128px;box-sizing:border-box;border:1px solid #f6f6f6;background:linear-gradient(#dae7dc 0,#dae7dc 49.7%,#e6e6e6 49.7%,#e6e6e6 100%);"></div><span class="t" style="left:1479.4px;top:140.7px;font-size:14.5px;color:#f0f0f0;transform:scaleX(0.830);">90</span><div style="position:absolute;left:1568.5px;top:7px;width:124.9px;height:128px;box-sizing:border-box;border:1px solid #f6f6f6;background:linear-gradient(#effef4 0,#effef4 49.7%,#fcfcfc 49.7%,#fcfcfc 100%);"></div><span class="t" style="left:1620.9px;top:140.7px;font-size:14.5px;color:#f0f0f0;transform:scaleX(0.830);">100</span><span class="t" style="left:100.3px;top:56.5px;font-size:14px;color:#f0f0f0;transform:rotate(-90deg) scaleX(1.005);font-weight:bold;">Actual</span><span class="t" style="left:100.3px;top:128.4px;font-size:14px;color:#f0f0f0;transform:rotate(-90deg) scaleX(1.018);font-weight:bold;">Target</span></div>
<span class="t" style="left:222.5px;top:861.8px;font-size:36.3px;color:#f0f0f0;transform:scaleX(0.850);-webkit-text-stroke:0.3px #f0f0f0;">Current Reading</span>
<span class="t" style="left:222.5px;top:921.3px;font-size:29px;color:#f0f0f0;transform:scaleX(0.892);-webkit-text-stroke:0.25px #f0f0f0;">x: 0.2206</span>
<span class="t" style="left:377.0px;top:921.3px;font-size:29px;color:#f0f0f0;transform:scaleX(0.887);-webkit-text-stroke:0.25px #f0f0f0;">y: 0.234</span>
<span class="t" style="left:222.5px;top:963.2px;font-size:29px;color:#f0f0f0;transform:scaleX(0.913);-webkit-text-stroke:0.25px #f0f0f0;">u': 0.1644</span>
<span class="t" style="left:377.0px;top:963.2px;font-size:29px;color:#f0f0f0;transform:scaleX(0.901);-webkit-text-stroke:0.25px #f0f0f0;">v': 0.3924</span>
<span class="t" style="left:222.5px;top:1005.5px;font-size:29px;color:#f0f0f0;transform:scaleX(0.928);-webkit-text-stroke:0.25px #f0f0f0;">cd/m²: 0.1712</span>
<span class="t" style="left:222.5px;top:1047.5px;font-size:29px;color:#f0f0f0;transform:scaleX(0.878);-webkit-text-stroke:0.25px #f0f0f0;">ΔE 2000: 1.11</span>
<div class="ciebg" style="position:absolute;left:577px;top:856.5px;width:258.5px;height:207.0px;overflow:hidden;"><div style="height:3.0px;background:linear-gradient(90deg,#00ff7c,#00ff7a,#00ff79,#00ff77,#00ff76,#00ff74,#02ff72,#0eff71,#1aff6f,#26ff6d,#33ff6b,#40ff69,#4dff67,#5aff65,#68ff63,#77ff61,#85ff5f,#94ff5d,#a4ff5b,#b4ff58,#c4ff56,#d5ff53,#e7ff51,#f9ff4e,#fff348,#ffe341,#ffd43a,#ffc734,#ffbb2f,#ffb02a)"></div><div style="height:3.0px;background:linear-gradient(90deg,#00ff7e,#00ff7d,#00ff7b,#00ff7a,#00ff78,#00ff77,#04ff75,#10ff73,#1cff72,#28ff70,#35ff6e,#42ff6c,#4fff6a,#5dff68,#6bff66,#79ff64,#88ff62,#98ff60,#a7ff5e,#b7ff5b,#c8ff59,#d9ff56,#ebff54,#fdff51,#ffef4a,#ffdf42,#ffd13c,#ffc436,#ffb830,#ffad2b)"></div><div style="height:3.0px;background:linear-gradient(90deg,#00ff81,#00ff80,#00ff7e,#00ff7d,#00ff7b,#00ff79,#05ff78,#11ff76,#1dff74,#2aff73,#37ff71,#44ff6f,#51ff6d,#5fff6b,#6eff69,#7cff67,#8bff65,#9bff63,#abff61,#bbff5e,#ccff5c,#deff59,#f0ff57,#fffc53,#ffeb4b,#ffdb44,#ffcd3d,#ffc037,#ffb432,#ffaa2d)"></div><div style="height:3.0px;background:linear-gradient(90deg,#00ff84,#00ff82,#00ff81,#00ff7f,#00ff7e,#00ff7c,#07ff7b,#13ff79,#1fff77,#2cff76,#39ff74,#46ff72,#54ff70,#62ff6e,#70ff6c,#7fff6a,#8eff68,#9eff66,#aeff64,#bfff61,#d0ff5f,#e2ff5d,#f4ff5a,#fff755,#ffe64d,#ffd745,#ffc93f,#ffbd38,#ffb133,#ffa72e)"></div><div style="height:3.0px;background:linear-gradient(90deg,#00ff86,#00ff85,#00ff84,#00ff82,#00ff81,#00ff7f,#08ff7e,#14ff7c,#21ff7a,#2eff79,#3bff77,#48ff75,#56ff73,#64ff71,#73ff6f,#82ff6d,#92ff6b,#a2ff69,#b2ff67,#c3ff65,#d4ff62,#e6ff60,#f9ff5d,#fff356,#ffe24e,#ffd347,#ffc540,#ffb93a,#ffae34,#ffa42f)"></div><div style="height:3.0px;background:linear-gradient(90deg,#00ff89,#00ff88,#00ff86,#00ff85,#00ff84,#00ff82,#0aff80,#16ff7f,#23ff7d,#30ff7c,#3dff7a,#4aff78,#59ff76,#67ff74,#76ff72,#85ff70,#95ff6e,#a5ff6c,#b6ff6a,#c7ff68,#d9ff65,#ebff63,#feff61,#ffee58,#ffde50,#ffcf48,#ffc241,#ffb63b,#ffab36,#ffa130)"></div><div style="height:3.0px;background:linear-gradient(90deg,#00ff8c,#00ff8b,#00ff89,#00ff88,#00ff87,#00ff85,#0bff83,#18ff82,#24ff80,#31ff7f,#3fff7d,#4dff7b,#5bff79,#6aff77,#79ff76,#88ff74,#98ff72,#a9ff6f,#baff6d,#cbff6b,#ddff69,#f0ff66,#fffb63,#ffe959,#ffd951,#ffcb49,#ffbe43,#ffb23d,#ffa737,#ff9e32)"></div><div style="height:3.0px;background:linear-gradient(90deg,#00ff8f,#00ff8e,#00ff8c,#00ff8b,#00ff8a,#00ff88,#0dff87,#19ff85,#26ff83,#33ff82,#41ff80,#4fff7e,#5eff7d,#6cff7b,#7cff79,#8bff77,#9cff75,#acff73,#bdff71,#cfff6f,#e1ff6c,#f4ff6a,#fff664,#ffe55b,#ffd552,#ffc74b,#ffbb44,#ffaf3e,#ffa438,#ff9b33)"></div><div style="height:3.0px;background:linear-gradient(90deg,#00ff92,#00ff91,#00ff8f,#00ff8e,#00ff8d,#02ff8b,#0eff8a,#1bff88,#28ff87,#36ff85,#43ff83,#52ff82,#60ff80,#6fff7e,#7fff7c,#8fff7a,#9fff78,#b0ff76,#c1ff74,#d3ff72,#e6ff70,#f9ff6d,#fff265,#ffe15c,#ffd154,#ffc34c,#ffb745,#ffac3f,#ffa139,#ff9834)"></div><div style="height:3.0px;background:linear-gradient(90deg,#00ff95,#00ff94,#00ff92,#00ff91,#00ff90,#03ff8e,#10ff8d,#1dff8b,#2aff8a,#38ff88,#46ff87,#54ff85,#63ff83,#72ff81,#82ff80,#92ff7e,#a3ff7c,#b4ff7a,#c6ff78,#d8ff76,#ebff73,#feff71,#ffed67,#ffdc5e,#ffcd55,#ffc04e,#ffb347,#ffa840,#ff9e3b,#ff9536)"></div><div style="height:3.0px;background:linear-gradient(90deg,#00ff98,#00ff97,#00ff96,#00ff94,#00ff93,#05ff92,#12ff90,#1fff8f,#2cff8d,#3aff8c,#48ff8a,#57ff88,#66ff87,#75ff85,#85ff83,#95ff81,#a6ff7f,#b8ff7d,#caff7b,#dcff79,#efff77,#fffb73,#ffe868,#ffd85f,#ffc956,#ffbc4f,#ffb048,#ffa542,#ff9b3c,#ff9237)"></div><div style="height:3.0px;background:linear-gradient(90deg,#00ff9b,#00ff9a,#00ff99,#00ff98,#00ff96,#06ff95,#13ff93,#20ff92,#2eff90,#3cff8f,#4aff8d,#59ff8c,#68ff8a,#78ff88,#88ff87,#99ff85,#aaff83,#bcff81,#ceff7f,#e1ff7d,#f4ff7b,#fff674,#ffe46a,#ffd460,#ffc558,#ffb850,#ffad49,#ffa243,#ff983d,#ff8f38)"></div><div style="height:3.0px;background:linear-gradient(90deg,#00ff9f,#00ff9d,#00ff9c,#00ff9b,#00ff9a,#08ff98,#15ff97,#22ff95,#30ff94,#3eff92,#4dff91,#5cff8f,#6bff8e,#7bff8c,#8bff8a,#9cff89,#aeff87,#c0ff85,#d2ff83,#e6ff81,#f9ff7f,#fff176,#ffdf6b,#ffd062,#ffc159,#ffb552,#ffa94b,#ff9f44,#ff953f,#ff8c39)"></div><div style="height:3.0px;background:linear-gradient(90deg,#00ffa2,#00ffa1,#00ff9f,#00ff9e,#00ff9d,#0aff9c,#17ff9a,#24ff99,#32ff97,#41ff96,#4fff95,#5eff93,#6eff91,#7eff90,#8fff8e,#a0ff8c,#b2ff8a,#c4ff89,#d7ff87,#eaff85,#ffff83,#ffec77,#ffdb6c,#ffcb63,#ffbe5a,#ffb153,#ffa64c,#ff9c46,#ff9240,#ff893a)"></div><div style="height:3.0px;background:linear-gradient(90deg,#00ffa5,#00ffa4,#00ffa3,#00ffa2,#00ffa0,#0bff9f,#18ff9e,#26ff9c,#34ff9b,#43ff9a,#52ff98,#61ff97,#71ff95,#81ff94,#92ff92,#a4ff90,#b6ff8e,#c8ff8d,#dcff8b,#efff89,#fffa84,#ffe778,#ffd66e,#ffc764,#ffba5c,#ffae54,#ffa34d,#ff9847,#ff8f41,#ff873c)"></div><div style="height:3.0px;background:linear-gradient(90deg,#00ffa9,#00ffa7,#00ffa6,#00ffa5,#00ffa4,#0dffa3,#1affa1,#28ffa0,#37ff9f,#45ff9d,#54ff9c,#64ff9b,#74ff99,#85ff97,#96ff96,#a8ff94,#baff92,#cdff91,#e0ff8f,#f5ff8d,#fff585,#ffe27a,#ffd26f,#ffc366,#ffb65d,#ffaa55,#ff9f4e,#ff9548,#ff8c42,#ff843d)"></div><div style="height:3.0px;background:linear-gradient(90deg,#00ffac,#00ffab,#00ffaa,#00ffa9,#01ffa8,#0fffa6,#1cffa5,#2affa4,#39ffa3,#48ffa1,#57ffa0,#67ff9e,#77ff9d,#88ff9b,#9aff9a,#acff98,#beff97,#d1ff95,#e5ff93,#faff91,#fff087,#ffde7b,#ffce70,#ffbf67,#ffb25e,#ffa757,#ff9c50,#ff9249,#ff8943,#ff813e)"></div><div style="height:3.0px;background:linear-gradient(90deg,#00ffb0,#00ffaf,#00ffad,#00ffac,#03ffab,#10ffaa,#1effa9,#2cffa8,#3bffa6,#4affa5,#5affa4,#6affa2,#7affa1,#8cff9f,#9dff9e,#b0ff9c,#c2ff9b,#d6ff99,#eaff97,#ffff95,#ffeb88,#ffd97c,#ffc972,#ffbb68,#ffaf60,#ffa358,#ff9951,#ff8f4a,#ff8645,#ff7e3f)"></div><div style="height:3.0px;background:linear-gradient(90deg,#00ffb3,#00ffb2,#00ffb1,#00ffb0,#04ffaf,#12ffae,#20ffad,#2fffac,#3dffaa,#4dffa9,#5dffa8,#6dffa6,#7effa5,#8fffa4,#a1ffa2,#b4ffa1,#c7ff9f,#dbff9d,#efff9c,#fff997,#ffe689,#ffd57d,#ffc573,#ffb869,#ffab61,#ffa059,#ff9652,#ff8c4c,#ff8446,#ff7c40)"></div><div style="height:3.0px;background:linear-gradient(90deg,#00ffb7,#00ffb6,#00ffb5,#00ffb4,#06ffb3,#14ffb2,#22ffb1,#31ffb0,#40ffae,#4fffad,#5fffac,#70ffab,#81ffa9,#93ffa8,#a5ffa7,#b8ffa5,#cbffa4,#e0ffa2,#f5ffa0,#fff498,#ffe18b,#ffd07f,#ffc174,#ffb46b,#ffa862,#ff9d5a,#ff9253,#ff894d,#ff8147,#ff7941)"></div><div style="height:3.0px;background:linear-gradient(90deg,#00ffbb,#00ffba,#00ffb9,#00ffb8,#08ffb7,#16ffb6,#24ffb5,#33ffb4,#42ffb3,#52ffb1,#62ffb0,#73ffaf,#85ffae,#97ffac,#a9ffab,#bcffaa,#d0ffa8,#e5ffa7,#faffa5,#ffef99,#ffdc8c,#ffcc80,#ffbd75,#ffb06c,#ffa463,#ff995b,#ff8f54,#ff864e,#ff7e48,#ff7642)"></div><div style="height:3.0px;background:linear-gradient(90deg,#00ffbf,#00ffbe,#00ffbd,#00ffbc,#09ffbb,#18ffba,#26ffb9,#35ffb8,#45ffb7,#55ffb6,#65ffb5,#76ffb3,#88ffb2,#9affb1,#adffb0,#c1ffae,#d5ffad,#eaffab,#fffea9,#ffea9a,#ffd88d,#ffc781,#ffb977,#ffac6d,#ffa164,#ff965d,#ff8c56,#ff834f,#ff7b49,#ff7444)"></div><div style="height:3.0px;background:linear-gradient(90deg,#00ffc2,#00ffc2,#00ffc1,#00ffc0,#0bffbf,#1affbe,#28ffbd,#38ffbc,#47ffbb,#58ffba,#68ffb9,#7affb8,#8cffb7,#9effb6,#b1ffb4,#c5ffb3,#daffb2,#efffb0,#fff9ab,#ffe59b,#ffd38e,#ffc382,#ffb578,#ffa86e,#ff9d66,#ff935e,#ff8957,#ff8150,#ff794a,#ff7145)"></div><div style="height:3.0px;background:linear-gradient(90deg,#00ffc7,#00ffc6,#00ffc5,#00ffc4,#0dffc3,#1cffc2,#2bffc1,#3affc1,#4affc0,#5bffbf,#6cffbe,#7dffbd,#8fffbb,#a2ffba,#b6ffb9,#caffb8,#dfffb7,#f5ffb5,#fff3ac,#ffe09d,#ffce8f,#ffbf83,#ffb179,#ffa56f,#ff9a67,#ff8f5f,#ff8658,#ff7e51,#ff764b,#ff6f46)"></div><div style="height:3.0px;background:linear-gradient(90deg,#00ffcb,#00ffca,#00ffc9,#00ffc8,#0fffc8,#1effc7,#2dffc6,#3dffc5,#4dffc4,#5effc3,#6fffc2,#81ffc1,#93ffc0,#a6ffbf,#baffbe,#cfffbd,#e4ffbc,#faffbb,#ffeead,#ffdb9e,#ffca90,#ffbb85,#ffad7a,#ffa171,#ff9668,#ff8c60,#ff8359,#ff7b52,#ff734c,#ff6c47)"></div><div style="height:3.0px;background:linear-gradient(90deg,#00ffcf,#00ffce,#00ffcd,#02ffcd,#11ffcc,#20ffcb,#2fffca,#3fffca,#50ffc9,#61ffc8,#72ffc7,#84ffc6,#97ffc5,#abffc4,#bfffc3,#d4ffc2,#eaffc1,#fffebf,#ffe8ae,#ffd69f,#ffc592,#ffb786,#ffa97b,#ff9e72,#ff9369,#ff8961,#ff805a,#ff7854,#ff714e,#ff6a48)"></div><div style="height:3.0px;background:linear-gradient(90deg,#00ffd3,#00ffd2,#00ffd2,#04ffd1,#13ffd1,#22ffd0,#31ffcf,#42ffce,#52ffce,#64ffcd,#76ffcc,#88ffcb,#9bffca,#afffc9,#c4ffc8,#d9ffc7,#efffc6,#fff8c0,#ffe3af,#ffd1a0,#ffc193,#ffb387,#ffa67c,#ff9a73,#ff906a,#ff8662,#ff7d5b,#ff7555,#ff6e4f,#ff6749)"></div><div style="height:3.0px;background:linear-gradient(90deg,#00ffd8,#00ffd7,#00ffd6,#06ffd6,#15ffd5,#24ffd5,#34ffd4,#44ffd3,#55ffd3,#67ffd2,#79ffd1,#8cffd0,#9fffcf,#b4ffcf,#c9ffce,#deffcd,#f5ffcc,#fff2c1,#ffdeb0,#ffcca1,#ffbd94,#ffaf88,#ffa27d,#ff9774,#ff8c6b,#ff8364,#ff7a5c,#ff7356,#ff6b50,#ff654a)"></div><div style="height:3.0px;background:linear-gradient(90deg,#00ffdc,#00ffdc,#00ffdb,#07ffda,#17ffda,#26ffd9,#36ffd9,#47ffd8,#58ffd8,#6affd7,#7dffd6,#90ffd6,#a4ffd5,#b8ffd4,#ceffd3,#e4ffd3,#fbffd2,#ffedc2,#ffd9b1,#ffc8a2,#ffb895,#ffab89,#ff9e7f,#ff9375,#ff896c,#ff8065,#ff785d,#ff7057,#ff6951,#ff624b)"></div><div style="height:3.0px;background:linear-gradient(90deg,#00ffe1,#00ffe0,#00ffe0,#09ffdf,#19ffdf,#29ffde,#39ffde,#4affdd,#5bffdd,#6effdc,#80ffdc,#94ffdb,#a8ffda,#bdffda,#d3ffd9,#e9ffd8,#fffdd6,#ffe7c3,#ffd4b2,#ffc3a3,#ffb496,#ffa78a,#ff9b80,#ff9076,#ff866e,#ff7d66,#ff755e,#ff6d58,#ff6652,#ff604c)"></div><div style="height:3.0px;background:linear-gradient(90deg,#00ffe5,#00ffe5,#00ffe5,#0bffe4,#1bffe4,#2bffe3,#3cffe3,#4dffe3,#5fffe2,#71ffe2,#84ffe1,#98ffe1,#adffe0,#c2ffdf,#d8ffdf,#efffde,#fff7d7,#ffe2c4,#ffcfb3,#ffbea4,#ffb097,#ffa38b,#ff9781,#ff8c77,#ff836f,#ff7a67,#ff7260,#ff6b59,#ff6453,#ff5d4d)"></div><div style="height:3.0px;background:linear-gradient(90deg,#00ffea,#00ffea,#00ffea,#0dffe9,#1dffe9,#2dffe9,#3effe8,#50ffe8,#62ffe8,#75ffe7,#88ffe7,#9cffe6,#b1ffe6,#c7ffe5,#deffe5,#f5ffe5,#fff1d8,#ffdcc5,#ffcab4,#ffbaa5,#ffac98,#ff9f8c,#ff9382,#ff8978,#ff8070,#ff7768,#ff6f61,#ff685a,#ff6154,#ff5b4e)"></div><div style="height:3.0px;background:linear-gradient(90deg,#00ffef,#00ffef,#00ffef,#0fffee,#1fffee,#30ffee,#41ffee,#53ffed,#65ffed,#78ffed,#8cffed,#a1ffec,#b6ffec,#ccffec,#e3ffeb,#fbffeb,#ffebd8,#ffd7c5,#ffc5b5,#ffb6a6,#ffa899,#ff9b8d,#ff9083,#ff8679,#ff7d71,#ff7469,#ff6c62,#ff655b,#ff5f55,#ff594f)"></div><div style="height:3.0px;background:linear-gradient(90deg,#00fff4,#00fff4,#01fff4,#11fff4,#21fff4,#32fff3,#44fff3,#56fff3,#69fff3,#7cfff3,#90fff3,#a5fff2,#bbfff2,#d2fff2,#e9fff2,#fffcef,#ffe6d9,#ffd2c6,#ffc1b6,#ffb1a7,#ffa49a,#ff978e,#ff8c84,#ff837a,#ff7a72,#ff716a,#ff6a63,#ff635c,#ff5c56,#ff5650)"></div><div style="height:3.0px;background:linear-gradient(90deg,#00fff9,#00fff9,#03fff9,#13fff9,#24fff9,#35fff9,#47fff9,#59fff9,#6cfff9,#80fff9,#94fff9,#aafff9,#c0fff9,#d7fff8,#effff8,#fff6f0,#ffe0da,#ffcdc7,#ffbcb7,#ffada8,#ffa09b,#ff948f,#ff8985,#ff7f7b,#ff7673,#ff6e6b,#ff6764,#ff605d,#ff5a57,#ff5451)"></div><div style="height:3.0px;background:linear-gradient(90deg,#00ffff,#00ffff,#05ffff,#15ffff,#26ffff,#38ffff,#4affff,#5cffff,#70ffff,#84ffff,#99ffff,#afffff,#c5ffff,#ddffff,#f5ffff,#fff0f0,#ffdadb,#ffc8c8,#ffb7b8,#ffa9a9,#ff9c9c,#ff9090,#ff8686,#ff7c7d,#ff7374,#ff6c6c,#ff6465,#ff5e5e,#ff5758,#ff5252)"></div><div style="height:3.0px;background:linear-gradient(90deg,#00faff,#00faff,#07faff,#17faff,#28faff,#39f9ff,#4bf9ff,#5ef9ff,#71f9ff,#85f9ff,#99f9ff,#aff8ff,#c5f8ff,#ddf8ff,#f5f8ff,#ffeaf1,#ffd5db,#ffc3c9,#ffb3b8,#ffa5aa,#ff989d,#ff8d91,#ff8287,#ff797e,#ff7175,#ff696d,#ff6266,#ff5b5f,#ff5559,#ff4f53)"></div><div style="height:3.0px;background:linear-gradient(90deg,#00f5ff,#00f5ff,#09f4ff,#19f4ff,#29f4ff,#3bf4ff,#4cf3ff,#5ff3ff,#72f3ff,#85f3ff,#9af2ff,#aff2ff,#c5f2ff,#dcf1ff,#f4f1ff,#ffe4f1,#ffd0dc,#ffbeca,#ffaeb9,#ffa0ab,#ff949e,#ff8992,#ff7f88,#ff767f,#ff6e76,#ff666e,#ff5f67,#ff5960,#ff535a,#ff4d54)"></div><div style="height:3.0px;background:linear-gradient(90deg,#00f0ff,#00efff,#0befff,#1aefff,#2beeff,#3ceeff,#4eeeff,#60edff,#73edff,#86edff,#9becff,#b0ecff,#c6ebff,#dcebff,#f4ebff,#ffdef2,#ffcadd,#ffb9ca,#ffaaba,#ff9cac,#ff909f,#ff8593,#ff7c89,#ff7380,#ff6b77,#ff636f,#ff5c68,#ff5661,#ff505b,#ff4b55)"></div><div style="height:3.0px;background:linear-gradient(90deg,#00ebff,#00eaff,#0ceaff,#1ce9ff,#2ce9ff,#3de9ff,#4fe8ff,#61e8ff,#74e7ff,#87e7ff,#9be6ff,#b0e6ff,#c6e5ff,#dce5ff,#f4e4ff,#ffd8f3,#ffc5de,#ffb4cb,#ffa6bb,#ff98ad,#ff8da0,#ff8294,#ff788a,#ff7081,#ff6878,#ff6170,#ff5a69,#ff5462,#ff4e5c,#ff4956)"></div><div style="height:3.0px;background:linear-gradient(90deg,#00e6ff,#00e5ff,#0ee5ff,#1ee4ff,#2ee4ff,#3fe3ff,#50e3ff,#62e2ff,#74e2ff,#88e1ff,#9ce0ff,#b0e0ff,#c6dfff,#dcdeff,#f3deff,#ffd3f3,#ffc0de,#ffb0cc,#ffa1bc,#ff94ae,#ff89a1,#ff7f95,#ff758b,#ff6d81,#ff6579,#ff5e71,#ff576a,#ff5163,#ff4c5d,#ff4757)"></div><div style="height:3.0px;background:linear-gradient(90deg,#00e1ff,#00e0ff,#10e0ff,#1fdfff,#2fdeff,#40deff,#51ddff,#63ddff,#75dcff,#88dbff,#9cdbff,#b1daff,#c6d9ff,#dcd8ff,#f3d8ff,#ffcdf4,#ffbbdf,#ffabcd,#ff9dbd,#ff90af,#ff85a2,#ff7b96,#ff728c,#ff6a82,#ff627a,#ff5b72,#ff556b,#ff4f64,#ff495e,#ff4458)"></div><div style="height:3.0px;background:linear-gradient(90deg,#00dcff,#02dbff,#11dbff,#21daff,#31d9ff,#41d9ff,#52d8ff,#64d7ff,#76d7ff,#89d6ff,#9dd5ff,#b1d4ff,#c6d3ff,#dcd2ff,#f3d2ff,#ffc8f4,#ffb6e0,#ffa7ce,#ff99be,#ff8daf,#ff82a3,#ff7897,#ff6f8d,#ff6783,#ff5f7b,#ff5973,#ff526c,#ff4d65,#ff475f,#ff4259)"></div><div style="height:3.0px;background:linear-gradient(90deg,#00d7ff,#04d6ff,#13d6ff,#22d5ff,#32d4ff,#42d4ff,#53d3ff,#65d2ff,#77d1ff,#8ad0ff,#9dcfff,#b1cfff,#c6ceff,#dccdff,#f2ccff,#ffc2f5,#ffb1e0,#ffa2ce,#ff95be,#ff89b0,#ff7ea4,#ff7598,#ff6c8e,#ff6484,#ff5d7c,#ff5674,#ff506d,#ff4a66,#ff4560,#ff405a)"></div><div style="height:3.0px;background:linear-gradient(90deg,#00d2ff,#06d2ff,#14d1ff,#24d0ff,#33cfff,#44ceff,#55ceff,#66cdff,#78ccff,#8acbff,#9ecaff,#b2c9ff,#c6c8ff,#dcc7ff,#f2c6ff,#ffbdf5,#fface1,#ff9ecf,#ff91bf,#ff85b1,#ff7ba4,#ff7199,#ff698f,#ff6185,#ff5a7d,#ff5375,#ff4d6d,#ff4867,#ff4360,#ff3e5b)"></div><div style="height:3.0px;background:linear-gradient(90deg,#00ceff,#07cdff,#16ccff,#25cbff,#35caff,#45caff,#56c9ff,#67c8ff,#79c7ff,#8bc6ff,#9ec5ff,#b2c4ff,#c6c2ff,#dcc1ff,#f2c0ff,#ffb8f6,#ffa8e2,#ff99d0,#ff8dc0,#ff81b2,#ff77a5,#ff6e9a,#ff6690,#ff5e86,#ff577e,#ff5176,#ff4b6e,#ff4668,#ff4061,#ff3c5c)"></div><div style="height:3.0px;background:linear-gradient(90deg,#00c9ff,#09c8ff,#17c7ff,#27c7ff,#36c6ff,#46c5ff,#57c4ff,#68c3ff,#79c2ff,#8cc1ff,#9fbfff,#b2beff,#c6bdff,#dbbcff,#f1bbff,#ffb3f6,#ffa3e2,#ff95d1,#ff89c1,#ff7eb3,#ff74a6,#ff6b9b,#ff6390,#ff5b87,#ff547e,#ff4e77,#ff496f,#ff4369,#ff3e62,#ff3a5c)"></div><div style="height:3.0px;background:linear-gradient(90deg,#00c5ff,#0ac4ff,#19c3ff,#28c2ff,#37c1ff,#47c0ff,#58bfff,#69beff,#7abdff,#8cbbff,#9fbaff,#b2b9ff,#c7b8ff,#dbb6ff,#f1b5ff,#ffaef7,#ff9ee3,#ff91d1,#ff85c2,#ff7ab4,#ff70a7,#ff689c,#ff6091,#ff5888,#ff527f,#ff4c77,#ff4670,#ff4169,#ff3c63,#ff385d)"></div><div style="height:3.0px;background:linear-gradient(90deg,#00c0ff,#0cbfff,#1abeff,#29bdff,#39bcff,#48bbff,#59baff,#6ab9ff,#7bb8ff,#8db7ff,#a0b5ff,#b3b4ff,#c7b3ff,#dbb1ff,#f1b0ff,#ffa9f7,#ff9ae3,#ff8dd2,#ff81c2,#ff77b4,#ff6da8,#ff659d,#ff5d92,#ff5689,#ff4f80,#ff4978,#ff4471,#ff3f6a,#ff3a64,#ff365e)"></div><div style="height:3.0px;background:linear-gradient(90deg,#00bcff,#0ebbff,#1cbaff,#2bb9ff,#3ab8ff,#4ab7ff,#5ab5ff,#6ab4ff,#7cb3ff,#8eb2ff,#a0b0ff,#b3afff,#c7adff,#dbacff,#f0aaff,#ffa4f8,#ff96e4,#ff89d3,#ff7dc3,#ff73b5,#ff6aa9,#ff619d,#ff5a93,#ff538a,#ff4d81,#ff4779,#ff4172,#ff3c6b,#ff3865,#ff345f)"></div><div style="height:3.0px;background:linear-gradient(90deg,#01b8ff,#0fb7ff,#1db6ff,#2cb4ff,#3bb3ff,#4bb2ff,#5bb1ff,#6bb0ff,#7caeff,#8eadff,#a0abff,#b3aaff,#c7a8ff,#dba7ff,#f0a5ff,#ff9ff8,#ff91e5,#ff85d3,#ff79c4,#ff6fb6,#ff67aa,#ff5e9e,#ff5794,#ff508b,#ff4a82,#ff447a,#ff3f73,#ff3a6c,#ff3666,#ff3160)"></div><div style="height:3.0px;background:linear-gradient(90deg,#03b4ff,#11b2ff,#1fb1ff,#2db0ff,#3cafff,#4caeff,#5cacff,#6cabff,#7daaff,#8fa8ff,#a1a7ff,#b4a5ff,#c7a4ff,#dba2ff,#f0a0ff,#ff9bf9,#ff8de5,#ff81d4,#ff76c5,#ff6cb7,#ff63aa,#ff5b9f,#ff5495,#ff4e8c,#ff4883,#ff427b,#ff3d74,#ff386d,#ff3467,#ff2f61)"></div><div style="height:3.0px;background:linear-gradient(90deg,#04afff,#12aeff,#20adff,#2facff,#3eaaff,#4da9ff,#5da8ff,#6da6ff,#7ea5ff,#8fa3ff,#a1a2ff,#b4a0ff,#c79fff,#db9dff,#f09bff,#ff96f9,#ff89e6,#ff7dd5,#ff72c5,#ff69b8,#ff60ab,#ff58a0,#ff5196,#ff4b8c,#ff4584,#ff407c,#ff3b75,#ff366e,#ff3268,#ff2d62)"></div><div style="height:3.0px;background:linear-gradient(90deg,#06abff,#13aaff,#21a9ff,#30a8ff,#3fa6ff,#4ea5ff,#5ea3ff,#6ea2ff,#7fa0ff,#909fff,#a29dff,#b49cff,#c79aff,#db98ff,#ef96ff,#ff91fa,#ff84e6,#ff79d5,#ff6fc6,#ff65b8,#ff5dac,#ff55a1,#ff4f97,#ff488d,#ff4285,#ff3d7d,#ff3875,#ff346f,#ff2f68,#ff2b63)"></div><div style="height:3.0px;background:linear-gradient(90deg,#07a7ff,#15a6ff,#23a5ff,#31a3ff,#40a2ff,#4fa1ff,#5f9fff,#6f9eff,#7f9cff,#909aff,#a299ff,#b497ff,#c795ff,#db93ff,#ef92ff,#ff8dfa,#ff80e7,#ff75d6,#ff6bc7,#ff62b9,#ff5aad,#ff53a2,#ff4c97,#ff468e,#ff4085,#ff3b7e,#ff3676,#ff3270,#ff2d69,#ff2a63)"></div><div style="height:3.0px;background:linear-gradient(90deg,#09a3ff,#16a2ff,#24a1ff,#329fff,#419eff,#509cff,#609bff,#7099ff,#8098ff,#9196ff,#a394ff,#b593ff,#c791ff,#db8fff,#ef8dff,#ff88fb,#ff7ce8,#ff71d7,#ff67c7,#ff5fba,#ff57ae,#ff50a2,#ff4998,#ff438f,#ff3e86,#ff387e,#ff3477,#ff2f70,#ff2b6a,#ff2864)"></div><div style="height:3.0px;background:linear-gradient(90deg,#0a9fff,#189eff,#259dff,#349bff,#429aff,#5198ff,#6097ff,#7095ff,#8193ff,#9292ff,#a390ff,#b58eff,#c78cff,#db8aff,#ee88ff,#ff84fb,#ff78e8,#ff6dd7,#ff64c8,#ff5bbb,#ff54ae,#ff4da3,#ff4699,#ff4190,#ff3b87,#ff367f,#ff3278,#ff2d71,#ff296b,#ff2665)"></div><div style="height:3.0px;background:linear-gradient(90deg,#0c9cff,#199aff,#2799ff,#3597ff,#4396ff,#5294ff,#6193ff,#7191ff,#818fff,#928dff,#a38cff,#b58aff,#c888ff,#db86ff,#ee84ff,#ff80fc,#ff74e9,#ff6ad8,#ff61c9,#ff58bb,#ff51af,#ff4aa4,#ff449a,#ff3e91,#ff3988,#ff3480,#ff2f79,#ff2b72,#ff276c,#ff2466)"></div><div style="height:3.0px;background:linear-gradient(90deg,#0d98ff,#1a96ff,#2895ff,#3693ff,#4492ff,#5390ff,#628fff,#728dff,#828bff,#9389ff,#a487ff,#b585ff,#c883ff,#db81ff,#ee7fff,#ff7cfc,#ff70e9,#ff66d8,#ff5dc9,#ff55bc,#ff4eb0,#ff47a5,#ff419b,#ff3b91,#ff3689,#ff3281,#ff2d7a,#ff2973,#ff256d,#ff2267)"></div><div style="height:3.0px;background:linear-gradient(90deg,#0f94ff,#1c93ff,#2991ff,#378fff,#458eff,#548cff,#638bff,#7389ff,#8387ff,#9385ff,#a483ff,#b681ff,#c87fff,#da7dff,#ee7bff,#ff77fc,#ff6cea,#ff63d9,#ff5aca,#ff52bd,#ff4bb1,#ff44a6,#ff3e9b,#ff3992,#ff348a,#ff2f82,#ff2b7a,#ff2774,#ff236d,#ff2067)"></div><div style="height:3.0px;background:linear-gradient(90deg,#1090ff,#1d8fff,#2a8dff,#388cff,#468aff,#5588ff,#6487ff,#7385ff,#8383ff,#9481ff,#a57fff,#b67dff,#c87bff,#da79ff,#ed77ff,#ff73fd,#ff69ea,#ff5fda,#ff57cb,#ff4fbd,#ff48b1,#ff42a6,#ff3c9c,#ff3793,#ff328a,#ff2d83,#ff297b,#ff2574,#ff216e,#ff1e68)"></div><div style="height:3.0px;background:linear-gradient(90deg,#118dff,#1e8bff,#2c8aff,#3988ff,#4786ff,#5685ff,#6583ff,#7481ff,#847fff,#947dff,#a57bff,#b679ff,#c877ff,#da75ff,#ed72ff,#ff6ffd,#ff65eb,#ff5cda,#ff53cb,#ff4cbe,#ff45b2,#ff3fa7,#ff399d,#ff3494,#ff2f8b,#ff2b83,#ff277c,#ff2375,#ff206f,#ff1c69)"></div><div style="height:3.0px;background:linear-gradient(90deg,#1389ff,#2088ff,#2d86ff,#3a84ff,#4883ff,#5781ff,#667fff,#757dff,#857bff,#9579ff,#a577ff,#b675ff,#c873ff,#da71ff,#ed6eff,#ff6bfe,#ff61eb,#ff58db,#ff50cc,#ff49bf,#ff42b3,#ff3ca8,#ff379e,#ff3294,#ff2d8c,#ff2984,#ff257d,#ff2176,#ff1e70,#ff1a6a)"></div><div style="height:3.0px;background:linear-gradient(90deg,#1486ff,#2184ff,#2e82ff,#3c81ff,#497fff,#587dff,#667bff,#7679ff,#8577ff,#9575ff,#a673ff,#b771ff,#c86fff,#da6cff,#ed6aff,#ff67fe,#ff5dec,#ff55db,#ff4dcd,#ff46bf,#ff3fb3,#ff3aa8,#ff349e,#ff2f95,#ff2b8d,#ff2785,#ff237e,#ff1f77,#ff1c71,#ff196b)"></div><div style="height:3.0px;background:linear-gradient(90deg,#1582ff,#2281ff,#2f7fff,#3d7dff,#4a7bff,#5979ff,#6777ff,#7676ff,#8674ff,#9671ff,#a66fff,#b76dff,#c86bff,#da68ff,#ed66ff,#ff63fe,#ff5aec,#ff51dc,#ff4acd,#ff43c0,#ff3db4,#ff37a9,#ff329f,#ff2d96,#ff298e,#ff2486,#ff217e,#ff1d78,#ff1a71,#ff176b)"></div><div style="height:3.0px;background:linear-gradient(90deg,#177fff,#237dff,#307bff,#3e7aff,#4b78ff,#5a76ff,#6874ff,#7772ff,#8670ff,#966eff,#a66cff,#b769ff,#c867ff,#da65ff,#ec62ff,#ff60ff,#ff56ed,#ff4edc,#ff47ce,#ff40c1,#ff3ab5,#ff34aa,#ff2fa0,#ff2b97,#ff268e,#ff2286,#ff1f7f,#ff1b78,#ff1872,#ff156c)"></div><div style="height:3.0px;background:linear-gradient(90deg,#187bff,#257aff,#3178ff,#3f76ff,#4c74ff,#5a72ff,#6970ff,#786eff,#876cff,#976aff,#a768ff,#b766ff,#c863ff,#da61ff,#ec5eff,#ff5cff,#ff53ed,#ff4bdd,#ff44cf,#ff3dc1,#ff37b6,#ff32ab,#ff2da1,#ff2898,#ff248f,#ff2087,#ff1d80,#ff1979,#ff1673,#ff136d)"></div><div style="height:3.0px;background:linear-gradient(90deg,#1978ff,#2676ff,#3374ff,#4073ff,#4d71ff,#5b6fff,#6a6dff,#786bff,#8769ff,#9766ff,#a764ff,#b762ff,#c85fff,#da5dff,#ec5aff,#fe58ff,#ff4fee,#ff48de,#ff41cf,#ff3ac2,#ff34b6,#ff2fab,#ff2aa1,#ff2698,#ff2290,#ff1e88,#ff1b81,#ff177a,#ff1474,#ff116e)"></div><div style="height:3.0px;background:linear-gradient(90deg,#1a75ff,#2773ff,#3471ff,#416fff,#4e6dff,#5c6bff,#6a69ff,#7967ff,#8865ff,#9763ff,#a761ff,#b85eff,#c85cff,#da59ff,#ec57ff,#fe54ff,#ff4cee,#ff44de,#ff3ed0,#ff37c3,#ff32b7,#ff2dac,#ff28a2,#ff2499,#ff2091,#ff1c89,#ff1981,#ff157b,#ff1274,#ff106e)"></div></div>
<svg style="position:absolute;left:0;top:810px" width="1920" height="300" viewBox="0 810 1920 300"><clipPath id="clc"><rect x="577" y="856.5" width="258.5" height="207.0"/></clipPath><polygon clip-path="url(#clc)" points="577,856.5 626.3,856.5 577,997.6" fill="#000" fill-opacity="0.41"/><rect x="577" y="856.5" width="258.5" height="207.0" fill="none" stroke="#8a8a8a" stroke-width="1.6"/><polyline clip-path="url(#clc)" points="628.2,1037.9 633.4,1032.6 638.6,1027.4 643.8,1022.2 649.0,1017.1 654.2,1012.1 659.4,1007.2 664.6,1002.3 669.8,997.5 675.0,992.8 680.2,988.2 685.4,983.6 690.6,979.2 695.8,974.8 701.0,970.5 706.2,966.3 711.4,962.2 716.6,958.1 721.8,954.2 727.0,950.3 732.2,946.5 737.4,942.8 742.6,939.2 747.8,935.7 753.0,932.3 758.2,929.0 763.4,925.8 768.6,922.6 773.8,919.6 779.0,916.7 784.2,913.8 789.4,911.1 794.6,908.5 799.8,905.9 805.0,903.5 810.2,901.2 815.4,899.0 820.6,896.9 825.8,894.9 831.0,893.0 836.5,891.1" fill="none" stroke="#000" stroke-width="3"/><ellipse cx="586.3" cy="1056.5" rx="5" ry="5.4" fill="#000"/><ellipse cx="682.8" cy="963.8" rx="5" ry="5.8" fill="#111"/><rect x="699.6" y="950.2" width="12.4" height="16.6" fill="#fff" fill-opacity="0.35" stroke="#000" stroke-width="1.9"/><ellipse cx="703.3" cy="943.6" rx="5" ry="5.4" fill="#ccc" stroke="#000" stroke-width="1.3"/><ellipse cx="702.8" cy="944.4" rx="5" ry="5.4" fill="#ccc" stroke="#000" stroke-width="1.3"/><ellipse cx="702" cy="945.4" rx="5" ry="5.4" fill="#ccc" stroke="#000" stroke-width="1.3"/><ellipse cx="699.8" cy="948.6" rx="5" ry="5.4" fill="#fff" stroke="#000" stroke-width="1.3"/><path d="M624.5 1063.5V1070.5" stroke="#d2d2d2" stroke-width="1.4"/><text x="624.5" y="1091.0" font-size="17.5" fill="#d2d2d2" text-anchor="middle" textLength="29.0" lengthAdjust="spacingAndGlyphs">0.25</text><path d="M571 1043.8H577" stroke="#d2d2d2" stroke-width="1.4"/><text x="570.5" y="1050.0" font-size="17.5" fill="#d2d2d2" text-anchor="end" textLength="29.0" lengthAdjust="spacingAndGlyphs">0.25</text><path d="M688.9 1063.5V1070.5" stroke="#d2d2d2" stroke-width="1.4"/><text x="688.9" y="1091.0" font-size="17.5" fill="#d2d2d2" text-anchor="middle" textLength="21.0" lengthAdjust="spacingAndGlyphs">0.3</text><path d="M571 992.6H577" stroke="#d2d2d2" stroke-width="1.4"/><text x="570.5" y="998.8" font-size="17.5" fill="#d2d2d2" text-anchor="end" textLength="21.0" lengthAdjust="spacingAndGlyphs">0.3</text><path d="M753.3 1063.5V1070.5" stroke="#d2d2d2" stroke-width="1.4"/><text x="753.3" y="1091.0" font-size="17.5" fill="#d2d2d2" text-anchor="middle" textLength="29.0" lengthAdjust="spacingAndGlyphs">0.35</text><path d="M571 941.4H577" stroke="#d2d2d2" stroke-width="1.4"/><text x="570.5" y="947.6" font-size="17.5" fill="#d2d2d2" text-anchor="end" textLength="29.0" lengthAdjust="spacingAndGlyphs">0.35</text><path d="M817.7 1063.5V1070.5" stroke="#d2d2d2" stroke-width="1.4"/><text x="817.7" y="1091.0" font-size="17.5" fill="#d2d2d2" text-anchor="middle" textLength="21.0" lengthAdjust="spacingAndGlyphs">0.4</text><path d="M571 890.2H577" stroke="#d2d2d2" stroke-width="1.4"/><text x="570.5" y="896.4" font-size="17.5" fill="#d2d2d2" text-anchor="end" textLength="21.0" lengthAdjust="spacingAndGlyphs">0.4</text><text x="688.0" y="851.0" font-size="17.5" fill="#d2d2d2" text-anchor="middle" textLength="78.0" lengthAdjust="spacingAndGlyphs">CIE 1931 xy</text></svg>
<div class="table" style="position:absolute;left:848px;top:821px;width:1062.5px;height:280px;overflow:hidden;"><div style="position:absolute;left:0px;top:0px;width:1062.5px;height:34.5px;background:linear-gradient(#2d2d2d 0,#292929 50%,#161616 50%,#131313 94%,#0a0a0a 100%);"></div><div style="position:absolute;left:0px;top:0px;width:14px;height:34.5px;background:#000;"></div><span class="t" style="left:152.0px;top:8.9px;font-size:18.5px;color:#f2f2f2;transform:scaleX(0.870);">0</span><span class="t" style="left:247.4px;top:8.9px;font-size:18.5px;color:#f2f2f2;transform:scaleX(0.870);">10</span><span class="t" style="left:333.2px;top:8.9px;font-size:18.5px;color:#f2f2f2;transform:scaleX(0.870);">20</span><span class="t" style="left:419.0px;top:8.9px;font-size:18.5px;color:#f2f2f2;transform:scaleX(0.870);">30</span><span class="t" style="left:504.8px;top:8.9px;font-size:18.5px;color:#f2f2f2;transform:scaleX(0.870);">40</span><span class="t" style="left:590.6px;top:8.9px;font-size:18.5px;color:#f2f2f2;transform:scaleX(0.870);">50</span><span class="t" style="left:677.2px;top:8.9px;font-size:18.5px;color:#f2f2f2;transform:scaleX(0.870);">60</span><span class="t" style="left:763.3px;top:8.9px;font-size:18.5px;color:#f2f2f2;transform:scaleX(0.870);">70</span><span class="t" style="left:849.2px;top:8.9px;font-size:18.5px;color:#f2f2f2;transform:scaleX(0.870);">80</span><span class="t" style="left:935.5px;top:8.9px;font-size:18.5px;color:#f2f2f2;transform:scaleX(0.870);">90</span><span class="t" style="left:1021.4px;top:8.9px;font-size:18.5px;color:#f2f2f2;transform:scaleX(0.870);">100</span><div style="position:absolute;left:0px;top:34.6px;width:1062.5px;height:32.3px;background:#404040;"></div><div style="position:absolute;left:0px;top:34.6px;width:14px;height:32.3px;background:#2a2a2a;"></div><span class="t" style="left:18.0px;top:43.8px;font-size:18.5px;color:#f2f2f2;transform:scaleX(0.803);">x: CIE31</span><span class="t" style="left:152.0px;top:43.8px;font-size:18.5px;color:#f2f2f2;transform:scaleX(0.870);">0.2206</span><span class="t" style="left:247.4px;top:43.8px;font-size:18.5px;color:#f2f2f2;transform:scaleX(0.870);">0.2953</span><span class="t" style="left:333.2px;top:43.8px;font-size:18.5px;color:#f2f2f2;transform:scaleX(0.870);">0.3079</span><span class="t" style="left:419.0px;top:43.8px;font-size:18.5px;color:#f2f2f2;transform:scaleX(0.870);">0.3101</span><span class="t" style="left:504.8px;top:43.8px;font-size:18.5px;color:#f2f2f2;transform:scaleX(0.870);">0.3106</span><span class="t" style="left:590.6px;top:43.8px;font-size:18.5px;color:#f2f2f2;transform:scaleX(0.870);">0.3107</span><span class="t" style="left:677.2px;top:43.8px;font-size:18.5px;color:#f2f2f2;transform:scaleX(0.870);">0.3107</span><span class="t" style="left:763.3px;top:43.8px;font-size:18.5px;color:#f2f2f2;transform:scaleX(0.870);">0.3106</span><span class="t" style="left:849.2px;top:43.8px;font-size:18.5px;color:#f2f2f2;transform:scaleX(0.870);">0.3104</span><span class="t" style="left:935.5px;top:43.8px;font-size:18.5px;color:#f2f2f2;transform:scaleX(0.870);">0.3101</span><span class="t" style="left:1021.4px;top:43.8px;font-size:18.5px;color:#f2f2f2;transform:scaleX(0.870);">0.3089</span><div style="position:absolute;left:0px;top:66.9px;width:1062.5px;height:32.3px;background:#808080;"></div><div style="position:absolute;left:0px;top:66.9px;width:14px;height:32.3px;background:#303030;"></div><span class="t" style="left:18.0px;top:76.0px;font-size:18.5px;color:#f2f2f2;transform:scaleX(0.803);">y: CIE31</span><span class="t" style="left:152.0px;top:76.0px;font-size:18.5px;color:#f2f2f2;transform:scaleX(0.870);">0.2340</span><span class="t" style="left:247.4px;top:76.0px;font-size:18.5px;color:#f2f2f2;transform:scaleX(0.870);">0.3253</span><span class="t" style="left:333.2px;top:76.0px;font-size:18.5px;color:#f2f2f2;transform:scaleX(0.870);">0.3401</span><span class="t" style="left:419.0px;top:76.0px;font-size:18.5px;color:#f2f2f2;transform:scaleX(0.870);">0.3428</span><span class="t" style="left:504.8px;top:76.0px;font-size:18.5px;color:#f2f2f2;transform:scaleX(0.870);">0.3424</span><span class="t" style="left:590.6px;top:76.0px;font-size:18.5px;color:#f2f2f2;transform:scaleX(0.870);">0.3427</span><span class="t" style="left:677.2px;top:76.0px;font-size:18.5px;color:#f2f2f2;transform:scaleX(0.870);">0.3425</span><span class="t" style="left:763.3px;top:76.0px;font-size:18.5px;color:#f2f2f2;transform:scaleX(0.870);">0.3422</span><span class="t" style="left:849.2px;top:76.0px;font-size:18.5px;color:#f2f2f2;transform:scaleX(0.870);">0.3420</span><span class="t" style="left:935.5px;top:76.0px;font-size:18.5px;color:#f2f2f2;transform:scaleX(0.870);">0.3413</span><span class="t" style="left:1021.4px;top:76.0px;font-size:18.5px;color:#f2f2f2;transform:scaleX(0.870);">0.3393</span><div style="position:absolute;left:0px;top:99.2px;width:1062.5px;height:32.7px;background:#404040;"></div><div style="position:absolute;left:0px;top:99.2px;width:14px;height:32.7px;background:#2a2a2a;"></div><span class="t" style="left:18.0px;top:108.2px;font-size:18.5px;color:#f2f2f2;transform:scaleX(0.770);">Y</span><span class="t" style="left:152.0px;top:108.2px;font-size:18.5px;color:#f2f2f2;transform:scaleX(0.870);">0.1712</span><span class="t" style="left:247.4px;top:108.2px;font-size:18.5px;color:#f2f2f2;transform:scaleX(0.870);">1.3633</span><span class="t" style="left:333.2px;top:108.2px;font-size:18.5px;color:#f2f2f2;transform:scaleX(0.870);">5.9313</span><span class="t" style="left:419.0px;top:108.2px;font-size:18.5px;color:#f2f2f2;transform:scaleX(0.870);">15.6738</span><span class="t" style="left:504.8px;top:108.2px;font-size:18.5px;color:#f2f2f2;transform:scaleX(0.870);">33.3086</span><span class="t" style="left:590.6px;top:108.2px;font-size:18.5px;color:#f2f2f2;transform:scaleX(0.870);">59.9097</span><span class="t" style="left:677.2px;top:108.2px;font-size:18.5px;color:#f2f2f2;transform:scaleX(0.870);">87.2963</span><span class="t" style="left:763.3px;top:108.2px;font-size:18.5px;color:#f2f2f2;transform:scaleX(0.870);">120.6027</span><span class="t" style="left:849.2px;top:108.2px;font-size:18.5px;color:#f2f2f2;transform:scaleX(0.870);">164.8744</span><span class="t" style="left:935.5px;top:108.2px;font-size:18.5px;color:#f2f2f2;transform:scaleX(0.870);">219.5539</span><span class="t" style="left:1021.4px;top:108.2px;font-size:18.5px;color:#f2f2f2;transform:scaleX(0.870);">278.3633</span><div style="position:absolute;left:0px;top:131.9px;width:1062.5px;height:32.0px;background:#808080;"></div><div style="position:absolute;left:0px;top:131.9px;width:14px;height:32.0px;background:#303030;"></div><span class="t" style="left:18.0px;top:140.3px;font-size:18.5px;color:#f2f2f2;transform:scaleX(0.861);">Target Y</span><span class="t" style="left:152.0px;top:140.3px;font-size:18.5px;color:#f2f2f2;transform:scaleX(0.870);">0.0000</span><span class="t" style="left:247.4px;top:140.3px;font-size:18.5px;color:#f2f2f2;transform:scaleX(0.870);">2.8755</span><span class="t" style="left:333.2px;top:140.3px;font-size:18.5px;color:#f2f2f2;transform:scaleX(0.870);">9.2152</span><span class="t" style="left:419.0px;top:140.3px;font-size:18.5px;color:#f2f2f2;transform:scaleX(0.870);">20.1179</span><span class="t" style="left:504.8px;top:140.3px;font-size:18.5px;color:#f2f2f2;transform:scaleX(0.870);">36.9858</span><span class="t" style="left:590.6px;top:140.3px;font-size:18.5px;color:#f2f2f2;transform:scaleX(0.870);">60.0879</span><span class="t" style="left:677.2px;top:140.3px;font-size:18.5px;color:#f2f2f2;transform:scaleX(0.870);">88.6722</span><span class="t" style="left:763.3px;top:140.3px;font-size:18.5px;color:#f2f2f2;transform:scaleX(0.870);">123.9283</span><span class="t" style="left:849.2px;top:140.3px;font-size:18.5px;color:#f2f2f2;transform:scaleX(0.870);">168.0842</span><span class="t" style="left:935.5px;top:140.3px;font-size:18.5px;color:#f2f2f2;transform:scaleX(0.870);">220.2694</span><span class="t" style="left:1021.4px;top:140.3px;font-size:18.5px;color:#f2f2f2;transform:scaleX(0.870);">278.3633</span><div style="position:absolute;left:0px;top:163.9px;width:1062.5px;height:32.4px;background:#404040;"></div><div style="position:absolute;left:0px;top:163.9px;width:14px;height:32.4px;background:#2a2a2a;"></div><span class="t" style="left:18.0px;top:172.5px;font-size:18.5px;color:#f2f2f2;transform:scaleX(0.898);">Gamma Log/Log</span><span class="t" style="left:152.0px;top:172.5px;font-size:18.5px;color:#f2f2f2;transform:scaleX(0.870);">1.2778</span><span class="t" style="left:247.4px;top:172.5px;font-size:18.5px;color:#f2f2f2;transform:scaleX(0.870);">2.3297</span><span class="t" style="left:333.2px;top:172.5px;font-size:18.5px;color:#f2f2f2;transform:scaleX(0.870);">2.3913</span><span class="t" style="left:419.0px;top:172.5px;font-size:18.5px;color:#f2f2f2;transform:scaleX(0.870);">2.3766</span><span class="t" style="left:504.8px;top:172.5px;font-size:18.5px;color:#f2f2f2;transform:scaleX(0.870);">2.3171</span><div style="position:absolute;left:586.8px;top:164px;width:85px;height:30.3px;background:#efefef;border:1px solid #fff;box-sizing:border-box;"></div><span class="t" style="left:590.6px;top:172.5px;font-size:18.5px;color:#000;transform:scaleX(0.870);">2.2287</span><span class="t" style="left:677.2px;top:172.5px;font-size:18.5px;color:#f2f2f2;transform:scaleX(0.870);">2.2701</span><span class="t" style="left:763.3px;top:172.5px;font-size:18.5px;color:#f2f2f2;transform:scaleX(0.870);">2.3268</span><span class="t" style="left:849.2px;top:172.5px;font-size:18.5px;color:#f2f2f2;transform:scaleX(0.870);">2.3471</span><span class="t" style="left:935.5px;top:172.5px;font-size:18.5px;color:#f2f2f2;transform:scaleX(0.870);">2.3001</span><span class="t" style="left:1021.4px;top:172.5px;font-size:18.5px;color:#f2f2f2;transform:scaleX(0.870);">2.2749</span><div style="position:absolute;left:0px;top:196.3px;width:1062.5px;height:31.8px;background:#808080;"></div><div style="position:absolute;left:0px;top:196.3px;width:14px;height:31.8px;background:#303030;"></div><span class="t" style="left:18.0px;top:204.7px;font-size:18.5px;color:#f2f2f2;transform:scaleX(0.747);">CCT</span><span class="t" style="left:152.0px;top:204.7px;font-size:18.5px;color:#f2f2f2;transform:scaleX(0.870);">45968.0000</span><span class="t" style="left:247.4px;top:204.7px;font-size:18.5px;color:#f2f2f2;transform:scaleX(0.870);">7571.0000</span><span class="t" style="left:333.2px;top:204.7px;font-size:18.5px;color:#f2f2f2;transform:scaleX(0.870);">6671.0000</span><span class="t" style="left:419.0px;top:204.7px;font-size:18.5px;color:#f2f2f2;transform:scaleX(0.870);">6542.0000</span><span class="t" style="left:504.8px;top:204.7px;font-size:18.5px;color:#f2f2f2;transform:scaleX(0.870);">6517.0000</span><span class="t" style="left:590.6px;top:204.7px;font-size:18.5px;color:#f2f2f2;transform:scaleX(0.870);">6512.0000</span><span class="t" style="left:677.2px;top:204.7px;font-size:18.5px;color:#f2f2f2;transform:scaleX(0.870);">6514.0000</span><span class="t" style="left:763.3px;top:204.7px;font-size:18.5px;color:#f2f2f2;transform:scaleX(0.870);">6520.0000</span><span class="t" style="left:849.2px;top:204.7px;font-size:18.5px;color:#f2f2f2;transform:scaleX(0.870);">6530.0000</span><span class="t" style="left:935.5px;top:204.7px;font-size:18.5px;color:#f2f2f2;transform:scaleX(0.870);">6552.0000</span><span class="t" style="left:1021.4px;top:204.7px;font-size:18.5px;color:#f2f2f2;transform:scaleX(0.870);">6626.0000</span><div style="position:absolute;left:0px;top:228.1px;width:1062.5px;height:31.9px;background:#404040;"></div><div style="position:absolute;left:0px;top:228.1px;width:14px;height:31.9px;background:#2a2a2a;"></div><span class="t" style="left:18.0px;top:236.9px;font-size:18.5px;color:#f2f2f2;transform:scaleX(0.845);">ΔE 2000</span><span class="t" style="left:152.0px;top:236.9px;font-size:18.5px;color:#f2f2f2;transform:scaleX(0.870);">1.1134</span><span class="t" style="left:247.4px;top:236.9px;font-size:18.5px;color:#f2f2f2;transform:scaleX(0.870);">3.2399</span><span class="t" style="left:333.2px;top:236.9px;font-size:18.5px;color:#f2f2f2;transform:scaleX(0.870);">4.7298</span><span class="t" style="left:419.0px;top:236.9px;font-size:18.5px;color:#f2f2f2;transform:scaleX(0.870);">5.4291</span><span class="t" style="left:504.8px;top:236.9px;font-size:18.5px;color:#f2f2f2;transform:scaleX(0.870);">5.7242</span><span class="t" style="left:590.6px;top:236.9px;font-size:18.5px;color:#f2f2f2;transform:scaleX(0.870);">6.4855</span><span class="t" style="left:677.2px;top:236.9px;font-size:18.5px;color:#f2f2f2;transform:scaleX(0.870);">7.1524</span><span class="t" style="left:763.3px;top:236.9px;font-size:18.5px;color:#f2f2f2;transform:scaleX(0.870);">7.7383</span><span class="t" style="left:849.2px;top:236.9px;font-size:18.5px;color:#f2f2f2;transform:scaleX(0.870);">8.3869</span><span class="t" style="left:935.5px;top:236.9px;font-size:18.5px;color:#f2f2f2;transform:scaleX(0.870);">8.8664</span><span class="t" style="left:1021.4px;top:236.9px;font-size:18.5px;color:#f2f2f2;transform:scaleX(0.870);">9.0517</span><div class="hscroll" style="position:absolute;left:14px;top:260px;width:1048.5px;height:21px;"><div style="position:absolute;left:0px;top:0px;width:1048.5px;height:21px;background:#565656;"></div><div style="position:absolute;left:1px;top:2px;width:14px;height:17px;background:#727272;border:1px solid #8c8c8c;box-sizing:border-box;border-radius:3px;"><svg width="14" height="16" viewBox="0 0 14 16" style="position:absolute;left:0;top:0"><path d="M10 2.5v11l-6.5-5.5z" fill="#3a3a3a"/></svg></div><div style="position:absolute;left:17.5px;top:2px;width:974px;height:17px;background:#444;border-radius:8.5px;"></div><div style="position:absolute;left:1032.5px;top:2px;width:15px;height:17px;background:#727272;border:1px solid #8c8c8c;box-sizing:border-box;border-radius:3px;"><svg width="15" height="16" viewBox="0 0 15 16" style="position:absolute;left:0;top:0"><path d="M4.5 2.5v11l6.5-5.5z" fill="#3a3a3a"/></svg></div></div></div>
<div class="bottombar" style="position:absolute;left:201px;top:1108px;width:1719px;height:62px;"><div class="lvl" style="position:absolute;left:-0.6px;top:0px;width:125.3px;height:60.8px;background:linear-gradient(#1c1c1c,#2a2a2a 60%,#404040);border:1px solid #2a2a2a;border-radius:5px 5px 4px 4px;box-sizing:border-box;"><div style="position:absolute;left:4.6px;top:4px;width:115px;height:36px;background:#000000;border-radius:2.5px;box-shadow:0 0 0 1px rgba(0,0,0,.25);"></div><span class="t" style="left:59.3px;top:46.0px;font-size:10.5px;color:#fff;font-weight:bold;">0</span></div><div class="lvl" style="position:absolute;left:126.8px;top:0px;width:124.5px;height:60.8px;background:linear-gradient(#a0a0a0 0,#8c8c8c 7%,#7a7a7a 55%,#5e5e5e 100%);border:1px solid #a6a6a6;border-bottom-color:#555;border-radius:5px 5px 4px 4px;box-sizing:border-box;"><div style="position:absolute;left:4px;top:4px;width:115px;height:36px;background:#1c1c1c;border-radius:2.5px;box-shadow:0 0 0 1px rgba(0,0,0,.25);"></div><span class="t" style="left:56.4px;top:46.0px;font-size:10.5px;color:#262626;">10</span></div><div class="lvl" style="position:absolute;left:253.6px;top:0px;width:124.5px;height:60.8px;background:linear-gradient(#a0a0a0 0,#8c8c8c 7%,#7a7a7a 55%,#5e5e5e 100%);border:1px solid #a6a6a6;border-bottom-color:#555;border-radius:5px 5px 4px 4px;box-sizing:border-box;"><div style="position:absolute;left:4px;top:4px;width:115px;height:36px;background:#333333;border-radius:2.5px;box-shadow:0 0 0 1px rgba(0,0,0,.25);"></div><span class="t" style="left:56.4px;top:46.0px;font-size:10.5px;color:#262626;">20</span></div><div class="lvl" style="position:absolute;left:380.4px;top:0px;width:124.5px;height:60.8px;background:linear-gradient(#a0a0a0 0,#8c8c8c 7%,#7a7a7a 55%,#5e5e5e 100%);border:1px solid #a6a6a6;border-bottom-color:#555;border-radius:5px 5px 4px 4px;box-sizing:border-box;"><div style="position:absolute;left:4px;top:4px;width:115px;height:36px;background:#4d4d4d;border-radius:2.5px;box-shadow:0 0 0 1px rgba(0,0,0,.25);"></div><span class="t" style="left:56.4px;top:46.0px;font-size:10.5px;color:#262626;">30</span></div><div class="lvl" style="position:absolute;left:507.2px;top:0px;width:124.5px;height:60.8px;background:linear-gradient(#a0a0a0 0,#8c8c8c 7%,#7a7a7a 55%,#5e5e5e 100%);border:1px solid #a6a6a6;border-bottom-color:#555;border-radius:5px 5px 4px 4px;box-sizing:border-box;"><div style="position:absolute;left:4px;top:4px;width:115px;height:36px;background:#666666;border-radius:2.5px;box-shadow:0 0 0 1px rgba(0,0,0,.25);"></div><span class="t" style="left:56.4px;top:46.0px;font-size:10.5px;color:#262626;">40</span></div><div class="lvl" style="position:absolute;left:634.0px;top:0px;width:124.5px;height:60.8px;background:linear-gradient(#a0a0a0 0,#8c8c8c 7%,#7a7a7a 55%,#5e5e5e 100%);border:1px solid #a6a6a6;border-bottom-color:#555;border-radius:5px 5px 4px 4px;box-sizing:border-box;"><div style="position:absolute;left:4px;top:4px;width:115px;height:36px;background:#808080;border-radius:2.5px;box-shadow:0 0 0 1px rgba(0,0,0,.25);"></div><span class="t" style="left:56.4px;top:46.0px;font-size:10.5px;color:#262626;">50</span></div><div class="lvl" style="position:absolute;left:760.8px;top:0px;width:124.5px;height:60.8px;background:linear-gradient(#a0a0a0 0,#8c8c8c 7%,#7a7a7a 55%,#5e5e5e 100%);border:1px solid #a6a6a6;border-bottom-color:#555;border-radius:5px 5px 4px 4px;box-sizing:border-box;"><div style="position:absolute;left:4px;top:4px;width:115px;height:36px;background:#999999;border-radius:2.5px;box-shadow:0 0 0 1px rgba(0,0,0,.25);"></div><span class="t" style="left:56.4px;top:46.0px;font-size:10.5px;color:#262626;">60</span></div><div class="lvl" style="position:absolute;left:887.6px;top:0px;width:124.5px;height:60.8px;background:linear-gradient(#a0a0a0 0,#8c8c8c 7%,#7a7a7a 55%,#5e5e5e 100%);border:1px solid #a6a6a6;border-bottom-color:#555;border-radius:5px 5px 4px 4px;box-sizing:border-box;"><div style="position:absolute;left:4px;top:4px;width:115px;height:36px;background:#b3b3b3;border-radius:2.5px;box-shadow:0 0 0 1px rgba(0,0,0,.25);"></div><span class="t" style="left:56.4px;top:46.0px;font-size:10.5px;color:#262626;">70</span></div><div class="lvl" style="position:absolute;left:1014.4px;top:0px;width:124.5px;height:60.8px;background:linear-gradient(#a0a0a0 0,#8c8c8c 7%,#7a7a7a 55%,#5e5e5e 100%);border:1px solid #a6a6a6;border-bottom-color:#555;border-radius:5px 5px 4px 4px;box-sizing:border-box;"><div style="position:absolute;left:4px;top:4px;width:115px;height:36px;background:#cccccc;border-radius:2.5px;box-shadow:0 0 0 1px rgba(0,0,0,.25);"></div><span class="t" style="left:56.4px;top:46.0px;font-size:10.5px;color:#262626;">80</span></div><div class="lvl" style="position:absolute;left:1141.2px;top:0px;width:124.5px;height:60.8px;background:linear-gradient(#a0a0a0 0,#8c8c8c 7%,#7a7a7a 55%,#5e5e5e 100%);border:1px solid #a6a6a6;border-bottom-color:#555;border-radius:5px 5px 4px 4px;box-sizing:border-box;"><div style="position:absolute;left:4px;top:4px;width:115px;height:36px;background:#e6e6e6;border-radius:2.5px;box-shadow:0 0 0 1px rgba(0,0,0,.25);"></div><span class="t" style="left:56.4px;top:46.0px;font-size:10.5px;color:#262626;">90</span></div><div class="lvl" style="position:absolute;left:1268.0px;top:0px;width:124.5px;height:60.8px;background:linear-gradient(#a0a0a0 0,#8c8c8c 7%,#7a7a7a 55%,#5e5e5e 100%);border:1px solid #a6a6a6;border-bottom-color:#555;border-radius:5px 5px 4px 4px;box-sizing:border-box;"><div style="position:absolute;left:4px;top:4px;width:115px;height:36px;background:#ffffff;border-radius:2.5px;box-shadow:0 0 0 1px rgba(0,0,0,.25);"></div><span class="t" style="left:53.4px;top:46.0px;font-size:10.5px;color:#262626;">100</span></div><div class="cbtn" style="position:absolute;left:1396px;top:0px;width:48px;height:17.5px;background:linear-gradient(#a4a4a4,#6a6a6a);border-radius:4px 4px 0 0;box-shadow:inset 0 1px 0 #b4b4b4;"><svg style="position:absolute;left:16px;top:1px" width="16" height="16" viewBox="0 0 16 16"><defs><linearGradient id="cb" x1="0" y1="0" x2="0" y2="1"><stop offset="0" stop-color="#6a6a6a"/><stop offset="1" stop-color="#a6a6a6"/></linearGradient></defs><circle cx="8" cy="8" r="7" fill="url(#cb)"/><path d="M4 10.3h8l-4-4.6z" fill="#333"/></svg></div><div class="cbtn" style="position:absolute;left:1396px;top:19px;width:48px;height:41.6px;background:linear-gradient(#a4a4a4,#6a6a6a);border-radius:0 0 5px 5px;box-shadow:inset 0 1px 0 #b4b4b4;"><svg style="position:absolute;left:7px;top:4px" width="34" height="34" viewBox="0 0 34 34"><rect x="2" y="2" width="30" height="30" rx="5" fill="none" stroke="#222" stroke-width="2.6"/><rect x="3.6" y="3.6" width="26.8" height="26.8" rx="3.5" fill="#a4a4a4"/><rect x="3.6" y="17" width="26.8" height="13.4" rx="3" fill="#8a8a8a"/><rect x="10.5" y="10" width="13.5" height="14" fill="#000"/><rect x="10.5" y="10" width="13.5" height="7" fill="#222"/></svg></div><div class="cbtn" style="position:absolute;left:1445.4px;top:0px;width:45.4px;height:30px;background:linear-gradient(#a4a4a4,#6a6a6a);border-radius:4px 0 0 0;box-shadow:inset 0 1px 0 #b4b4b4;"><svg style="position:absolute;left:12.7px;top:5px" width="20" height="20" viewBox="0 0 20 20"><circle cx="10" cy="10" r="9.8" fill="url(#cb)"/><rect x="6.2" y="6.2" width="7.6" height="7.6" fill="#333"/></svg></div><div class="cbtn" style="position:absolute;left:1491.8px;top:0px;width:44.0px;height:30px;background:linear-gradient(#a4a4a4,#6a6a6a);border-radius:0;box-shadow:inset 0 1px 0 #b4b4b4;"><svg style="position:absolute;left:12.0px;top:5px" width="20" height="20" viewBox="0 0 20 20"><circle cx="10" cy="10" r="9.8" fill="url(#cb)"/><path d="M7 5.2v9.6l8-4.8z" fill="#333"/></svg></div><div class="cbtn" style="position:absolute;left:1536.8px;top:0px;width:44.0px;height:30px;background:linear-gradient(#a4a4a4,#6a6a6a);border-radius:0;box-shadow:inset 0 1px 0 #b4b4b4;"><svg style="position:absolute;left:12.0px;top:5px" width="20" height="20" viewBox="0 0 20 20"><circle cx="10" cy="10" r="9.8" fill="url(#cb)"/><path d="M7.6 5.5h-2.6v9h2.6M12.4 5.5h2.6v9h-2.6" fill="none" stroke="#333" stroke-width="1.5"/><path d="M8.3 10h1.2M10.6 10h1.2" stroke="#333" stroke-width="1.5"/></svg></div><div class="cbtn" style="position:absolute;left:1581.8px;top:0px;width:44.2px;height:30px;background:linear-gradient(#a4a4a4,#6a6a6a);border-radius:0;box-shadow:inset 0 1px 0 #b4b4b4;"><svg style="position:absolute;left:12.1px;top:5px" width="20" height="20" viewBox="0 0 20 20"><circle cx="10" cy="10" r="9.8" fill="url(#cb)"/><path d="M10 10c-1.4-2.6-5.2-2.8-5.2 0s3.800 2.600 5.200 0c1.400-2.600 5.200-2.800 5.200 0s-3.800 2.600-5.200 0z" fill="none" stroke="#333" stroke-width="1.5"/></svg></div><div class="cbtn" style="position:absolute;left:1627px;top:0px;width:44.2px;height:30px;background:linear-gradient(#a4a4a4,#6a6a6a);border-radius:0;box-shadow:inset 0 1px 0 #b4b4b4;"><svg style="position:absolute;left:12.1px;top:5px" width="20" height="20" viewBox="0 0 20 20"><circle cx="10" cy="10" r="9.8" fill="url(#cb)"/><path d="M5.4 9.2a4.700 4.700 0 0 1 8.400-2.400M14.600 10.800a4.700 4.700 0 0 1-8.400 2.400" fill="none" stroke="#333" stroke-width="1.9"/><path d="M14.800 3.800v4.200h-4.200zM5.200 16.200v-4.200h4.200z" fill="#333"/></svg></div><div style="position:absolute;left:1671.2px;top:0px;width:48px;height:31px;background:linear-gradient(90deg,#2c2c2c,#3a3a3a);"><svg style="position:absolute;left:13px;top:5px" width="21" height="21"><circle cx="10.5" cy="10.5" r="10" fill="#2a2a2a"/></svg></div><div class="cbtn" style="position:absolute;left:1445.4px;top:31.2px;width:135.6px;height:29.4px;background:linear-gradient(#a4a4a4,#6a6a6a);border-radius:5px 0 0 5px;box-shadow:inset 0 1px 0 #b4b4b4;"><svg style="position:absolute;left:20.5px;top:5px" width="20" height="20" viewBox="0 0 20 20"><circle cx="10" cy="10" r="9.800" fill="url(#cb)"/><path d="M9.300 6l-3.600 4 3.600 4M14 6l-3.600 4 3.600 4" fill="none" stroke="#333" stroke-width="1.4"/></svg><span class="t" style="left:56.2px;top:4.5px;font-size:21.6px;color:#303030;transform:scaleX(1.054);-webkit-text-stroke:0.5px #303030;">Back</span></div><div class="cbtn" style="position:absolute;left:1582px;top:31.2px;width:135.5px;height:29.4px;background:linear-gradient(#a4a4a4,#6a6a6a);border-radius:0 5px 5px 0;box-shadow:inset 0 1px 0 #b4b4b4;"><span class="t" style="left:26.5px;top:4.5px;font-size:21.6px;color:#303030;transform:scaleX(1.160);-webkit-text-stroke:0.5px #303030;">Next</span><svg style="position:absolute;left:97px;top:5px" width="20" height="20" viewBox="0 0 20 20"><circle cx="10" cy="10" r="9.800" fill="url(#cb)"/><path d="M6 6l3.600 4-3.600 4M10.700 6l3.600 4-3.600 4" fill="none" stroke="#333" stroke-width="1.4"/></svg></div></div>
</div></body></html>
